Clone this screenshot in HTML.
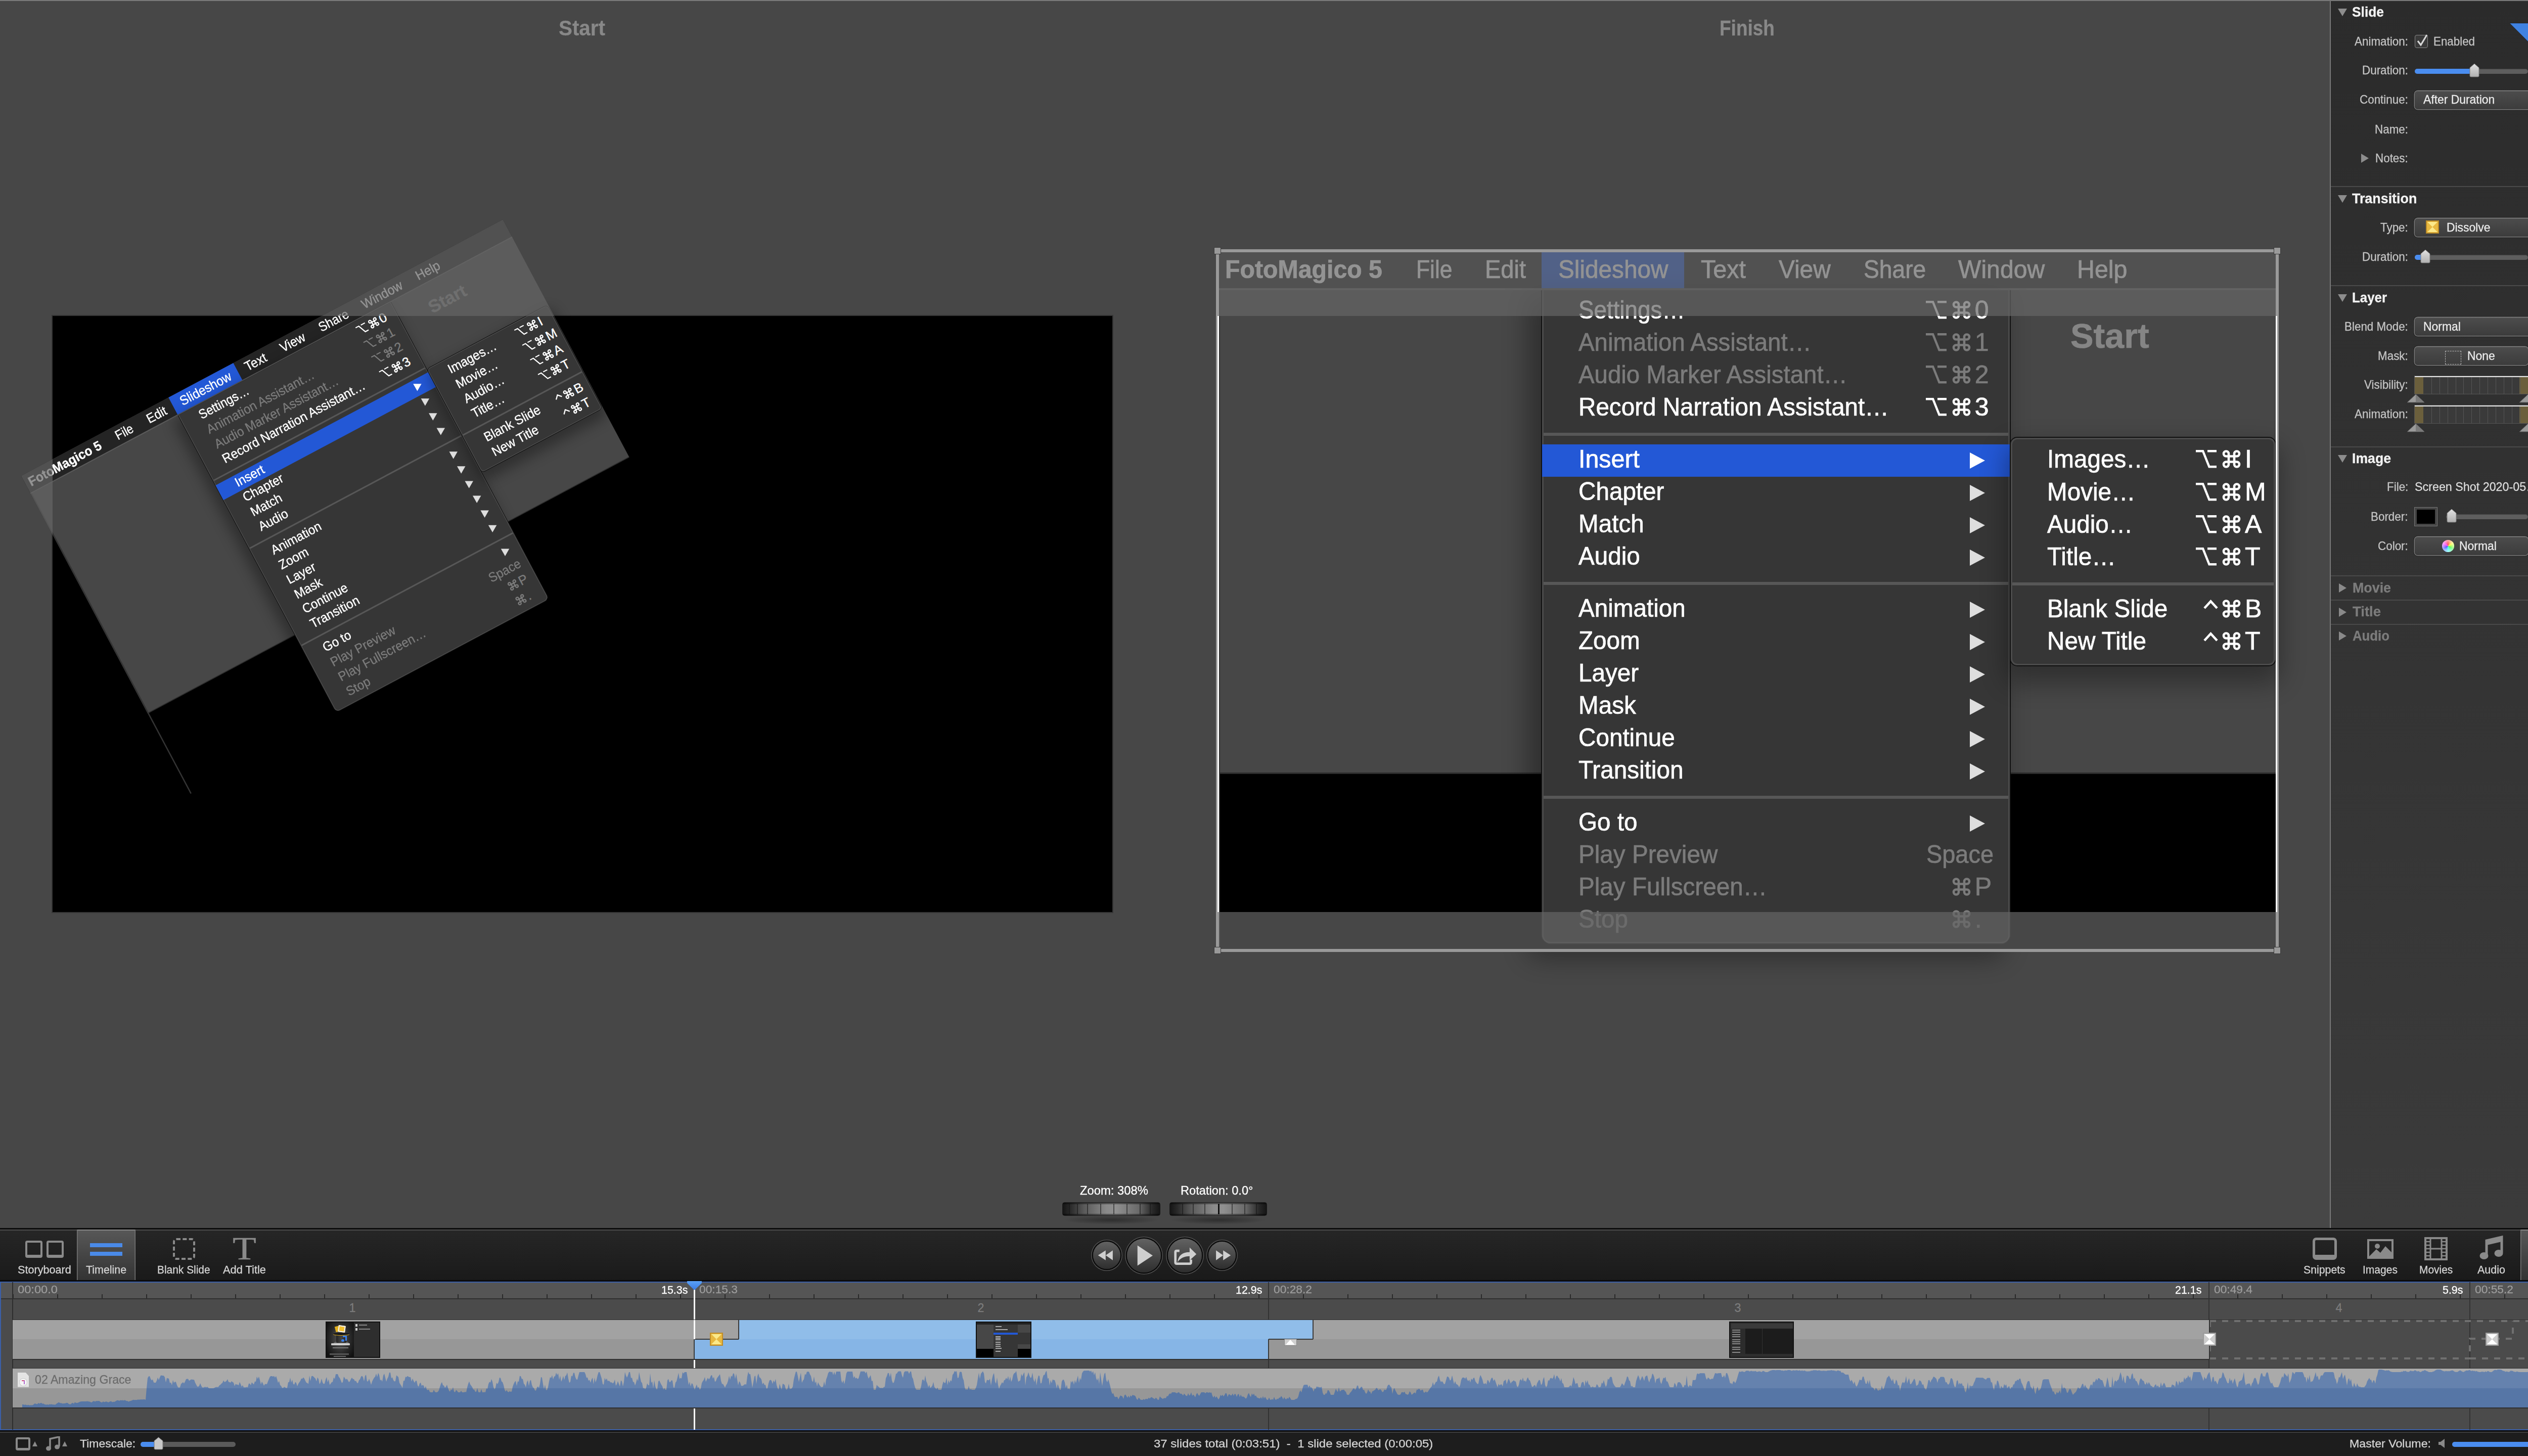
<!DOCTYPE html><html><head><meta charset="utf-8"><style>
*{margin:0;padding:0;box-sizing:border-box}
html,body{width:5120px;height:2880px;overflow:hidden;background:#474747}
body{position:relative;font-family:"Liberation Sans",sans-serif}
.t{position:absolute;white-space:nowrap;-webkit-text-stroke:0.3px currentColor}
.ab{position:absolute}
.lay .t{-webkit-text-stroke:0.7px currentColor}
</style></head><body><svg width="0" height="0" style="position:absolute"><defs>
<symbol id="cmd" viewBox="0 0 37 38"><path d="M13,8.5 V29.5 A5,5 0 1 1 8,24.5 H29 A5,5 0 1 1 24,29.5 V8.5 A5,5 0 1 1 29,13.5 H8 A5,5 0 1 1 13,8.5 Z" fill="none" stroke="currentColor" stroke-width="4.6"/></symbol>
<symbol id="opt" viewBox="0 0 41 36"><path d="M0,2.2 H14 L26.5,33.2 H41 M23,2.2 H41" fill="none" stroke="currentColor" stroke-width="4.4"/></symbol>
<symbol id="ctl" viewBox="0 0 29 19"><path d="M2,17 L14.5,3.5 L27,17" fill="none" stroke="currentColor" stroke-width="4.6"/></symbol>
</defs></svg><div style="position:absolute;left:0px;top:0px;width:4610px;height:2430px;background:#474747"></div><div style="position:absolute;left:0px;top:0px;width:4610px;height:2px;background:#7a7a7a"></div><div class="t" style="left:1105.0px;top:35.3px;font-size:42.15px;line-height:42.15px;font-weight:bold;color:#888888;transform:scaleX(0.9580);transform-origin:0 0;">Start</div><div class="t" style="left:3401.0px;top:35.3px;font-size:42.15px;line-height:42.15px;font-weight:bold;color:#888888;transform:scaleX(0.8783);transform-origin:0 0;">Finish</div><div style="position:absolute;left:102px;top:623px;width:2100px;height:1183px;background:#353535"></div><div style="position:absolute;left:104px;top:625px;width:2096px;height:1179px;background:#000"></div><div class="ab lay" style="left:0;top:0;width:2096px;height:1384px;transform-origin:0 0;transform:translate(41.96px,941.27px) rotate(-28.02deg) scale(0.5148)"><div style="position:absolute;left:0px;top:0px;width:2096px;height:1034px;background:#474747"></div><div style="position:absolute;left:0px;top:1034px;width:2096px;height:350px;background:#000"></div><div style="position:absolute;left:0px;top:1032px;width:2096px;height:3px;background:#2c2c2c"></div><div style="position:absolute;left:0px;top:0px;width:5px;height:1384px;background:#333333"></div><div class="t" style="left:1687.0px;top:134.2px;font-size:68.32px;line-height:68.32px;font-weight:bold;color:#858585;">Start</div><div style="position:absolute;left:0px;top:0px;width:2096px;height:74px;background:#242424"></div><div style="position:absolute;left:0px;top:74px;width:2096px;height:4px;background:#5a5a5a"></div><div style="position:absolute;left:641px;top:0px;width:282px;height:74px;background:#2358d6"></div><div class="t" style="left:15.0px;top:11.7px;font-size:50.87px;line-height:50.87px;font-weight:bold;color:#ffffff;transform:scaleX(0.9487);transform-origin:0 0;">FotoMagico 5</div><div class="t" style="left:392.6px;top:11.7px;font-size:50.87px;line-height:50.87px;font-weight:normal;color:#ffffff;transform:scaleX(0.8711);transform-origin:0 0;">File</div><div class="t" style="left:529.0px;top:11.7px;font-size:50.87px;line-height:50.87px;font-weight:normal;color:#ffffff;transform:scaleX(0.9240);transform-origin:0 0;">Edit</div><div class="t" style="left:673.5px;top:11.7px;font-size:50.87px;line-height:50.87px;font-weight:normal;color:#ffffff;transform:scaleX(0.9376);transform-origin:0 0;">Slideshow</div><div class="t" style="left:955.6px;top:11.7px;font-size:50.87px;line-height:50.87px;font-weight:normal;color:#ffffff;transform:scaleX(0.9540);transform-origin:0 0;">Text</div><div class="t" style="left:1109.7px;top:11.7px;font-size:50.87px;line-height:50.87px;font-weight:normal;color:#ffffff;transform:scaleX(0.9392);transform-origin:0 0;">View</div><div class="t" style="left:1278.4px;top:11.7px;font-size:50.87px;line-height:50.87px;font-weight:normal;color:#ffffff;transform:scaleX(0.9083);transform-origin:0 0;">Share</div><div class="t" style="left:1465.3px;top:11.7px;font-size:50.87px;line-height:50.87px;font-weight:normal;color:#ffffff;transform:scaleX(0.9462);transform-origin:0 0;">Window</div><div class="t" style="left:1700.0px;top:11.7px;font-size:50.87px;line-height:50.87px;font-weight:normal;color:#ffffff;transform:scaleX(0.9501);transform-origin:0 0;">Help</div><div style="position:absolute;left:642px;top:78px;width:925px;height:1292px;background:#363636;border-radius:0 0 17px 17px;box-shadow:-2px 0 0 0 #111, 2px 0 0 0 #111, 0 2px 0 0 #111, inset 3px 0 0 0 #4b4b4b, inset -3px 0 0 0 #4b4b4b, inset 0 -3px 0 0 #4b4b4b, -20px 20px 50px 10px rgba(0,0,0,0.33)"></div><div class="t" style="left:713.7px;top:92.1px;font-size:50.15px;line-height:50.15px;font-weight:normal;color:#ffffff;transform:scaleX(0.9121);transform-origin:0 0;">Settings…</div><svg style="position:absolute;left:1452.8px;top:98.1px;width:37px;height:38px;color:#ffffff;overflow:visible"><use href="#cmd" xlink:href="#cmd"/></svg><svg style="position:absolute;left:1400.8px;top:99.2px;width:41px;height:36px;color:#ffffff;overflow:visible"><use href="#opt" xlink:href="#opt"/></svg><div class="t" style="left:1497.8px;top:92.1px;font-size:50.15px;line-height:50.15px;font-weight:normal;color:#ffffff;">0</div><div class="t" style="left:713.7px;top:156.1px;font-size:50.15px;line-height:50.15px;font-weight:normal;color:#7b7b7b;transform:scaleX(0.9452);transform-origin:0 0;">Animation Assistant…</div><svg style="position:absolute;left:1452.8px;top:162.1px;width:37px;height:38px;color:#7b7b7b;overflow:visible"><use href="#cmd" xlink:href="#cmd"/></svg><svg style="position:absolute;left:1400.8px;top:163.2px;width:41px;height:36px;color:#7b7b7b;overflow:visible"><use href="#opt" xlink:href="#opt"/></svg><div class="t" style="left:1497.8px;top:156.1px;font-size:50.15px;line-height:50.15px;font-weight:normal;color:#7b7b7b;">1</div><div class="t" style="left:713.7px;top:220.1px;font-size:50.15px;line-height:50.15px;font-weight:normal;color:#7b7b7b;transform:scaleX(0.9450);transform-origin:0 0;">Audio Marker Assistant…</div><svg style="position:absolute;left:1452.8px;top:226.1px;width:37px;height:38px;color:#7b7b7b;overflow:visible"><use href="#cmd" xlink:href="#cmd"/></svg><svg style="position:absolute;left:1400.8px;top:227.2px;width:41px;height:36px;color:#7b7b7b;overflow:visible"><use href="#opt" xlink:href="#opt"/></svg><div class="t" style="left:1497.8px;top:220.1px;font-size:50.15px;line-height:50.15px;font-weight:normal;color:#7b7b7b;">2</div><div class="t" style="left:713.7px;top:284.1px;font-size:50.15px;line-height:50.15px;font-weight:normal;color:#ffffff;transform:scaleX(0.9496);transform-origin:0 0;">Record Narration Assistant…</div><svg style="position:absolute;left:1452.8px;top:290.1px;width:37px;height:38px;color:#ffffff;overflow:visible"><use href="#cmd" xlink:href="#cmd"/></svg><svg style="position:absolute;left:1400.8px;top:291.2px;width:41px;height:36px;color:#ffffff;overflow:visible"><use href="#opt" xlink:href="#opt"/></svg><div class="t" style="left:1497.8px;top:284.1px;font-size:50.15px;line-height:50.15px;font-weight:normal;color:#ffffff;">3</div><div style="position:absolute;left:645px;top:360px;width:919px;height:6px;background:#575757"></div><div style="position:absolute;left:642px;top:383px;width:925px;height:64px;background:#2358d6"></div><div class="t" style="left:713.7px;top:387.1px;font-size:50.15px;line-height:50.15px;font-weight:normal;color:#ffffff;transform:scaleX(0.9649);transform-origin:0 0;">Insert</div><div style="position:absolute;left:1487.0px;top:401.0px;width:0;height:0;border-top:28px solid #ffffff;border-left:16.0px solid transparent;border-right:16.0px solid transparent;transform:rotate(28.02deg);transform-origin:16.0px 14.0px"></div><div class="t" style="left:713.7px;top:451.1px;font-size:50.15px;line-height:50.15px;font-weight:normal;color:#ffffff;transform:scaleX(0.9500);transform-origin:0 0;">Chapter</div><div style="position:absolute;left:1487.0px;top:465.0px;width:0;height:0;border-top:28px solid #dedede;border-left:16.0px solid transparent;border-right:16.0px solid transparent;transform:rotate(28.02deg);transform-origin:16.0px 14.0px"></div><div class="t" style="left:713.7px;top:515.1px;font-size:50.15px;line-height:50.15px;font-weight:normal;color:#ffffff;transform:scaleX(0.9500);transform-origin:0 0;">Match</div><div style="position:absolute;left:1487.0px;top:529.0px;width:0;height:0;border-top:28px solid #dedede;border-left:16.0px solid transparent;border-right:16.0px solid transparent;transform:rotate(28.02deg);transform-origin:16.0px 14.0px"></div><div class="t" style="left:713.7px;top:579.1px;font-size:50.15px;line-height:50.15px;font-weight:normal;color:#ffffff;transform:scaleX(0.9500);transform-origin:0 0;">Audio</div><div style="position:absolute;left:1487.0px;top:593.0px;width:0;height:0;border-top:28px solid #dedede;border-left:16.0px solid transparent;border-right:16.0px solid transparent;transform:rotate(28.02deg);transform-origin:16.0px 14.0px"></div><div style="position:absolute;left:645px;top:655px;width:919px;height:6px;background:#575757"></div><div class="t" style="left:713.7px;top:682.1px;font-size:50.15px;line-height:50.15px;font-weight:normal;color:#ffffff;transform:scaleX(0.9500);transform-origin:0 0;">Animation</div><div style="position:absolute;left:1487.0px;top:696.0px;width:0;height:0;border-top:28px solid #dedede;border-left:16.0px solid transparent;border-right:16.0px solid transparent;transform:rotate(28.02deg);transform-origin:16.0px 14.0px"></div><div class="t" style="left:713.7px;top:746.1px;font-size:50.15px;line-height:50.15px;font-weight:normal;color:#ffffff;transform:scaleX(0.9500);transform-origin:0 0;">Zoom</div><div style="position:absolute;left:1487.0px;top:760.0px;width:0;height:0;border-top:28px solid #dedede;border-left:16.0px solid transparent;border-right:16.0px solid transparent;transform:rotate(28.02deg);transform-origin:16.0px 14.0px"></div><div class="t" style="left:713.7px;top:810.1px;font-size:50.15px;line-height:50.15px;font-weight:normal;color:#ffffff;transform:scaleX(0.9500);transform-origin:0 0;">Layer</div><div style="position:absolute;left:1487.0px;top:824.0px;width:0;height:0;border-top:28px solid #dedede;border-left:16.0px solid transparent;border-right:16.0px solid transparent;transform:rotate(28.02deg);transform-origin:16.0px 14.0px"></div><div class="t" style="left:713.7px;top:874.1px;font-size:50.15px;line-height:50.15px;font-weight:normal;color:#ffffff;transform:scaleX(0.9500);transform-origin:0 0;">Mask</div><div style="position:absolute;left:1487.0px;top:888.0px;width:0;height:0;border-top:28px solid #dedede;border-left:16.0px solid transparent;border-right:16.0px solid transparent;transform:rotate(28.02deg);transform-origin:16.0px 14.0px"></div><div class="t" style="left:713.7px;top:938.1px;font-size:50.15px;line-height:50.15px;font-weight:normal;color:#ffffff;transform:scaleX(0.9500);transform-origin:0 0;">Continue</div><div style="position:absolute;left:1487.0px;top:952.0px;width:0;height:0;border-top:28px solid #dedede;border-left:16.0px solid transparent;border-right:16.0px solid transparent;transform:rotate(28.02deg);transform-origin:16.0px 14.0px"></div><div class="t" style="left:713.7px;top:1002.1px;font-size:50.15px;line-height:50.15px;font-weight:normal;color:#ffffff;transform:scaleX(0.9500);transform-origin:0 0;">Transition</div><div style="position:absolute;left:1487.0px;top:1016.0px;width:0;height:0;border-top:28px solid #dedede;border-left:16.0px solid transparent;border-right:16.0px solid transparent;transform:rotate(28.02deg);transform-origin:16.0px 14.0px"></div><div style="position:absolute;left:645px;top:1078px;width:919px;height:6px;background:#575757"></div><div class="t" style="left:713.7px;top:1105.1px;font-size:50.15px;line-height:50.15px;font-weight:normal;color:#ffffff;transform:scaleX(0.9500);transform-origin:0 0;">Go to</div><div style="position:absolute;left:1487.0px;top:1119.0px;width:0;height:0;border-top:28px solid #dedede;border-left:16.0px solid transparent;border-right:16.0px solid transparent;transform:rotate(28.02deg);transform-origin:16.0px 14.0px"></div><div class="t" style="left:713.7px;top:1169.1px;font-size:50.15px;line-height:50.15px;font-weight:normal;color:#7b7b7b;transform:scaleX(0.9500);transform-origin:0 0;">Play Preview</div><div class="t" style="left:1401.7px;top:1169.1px;font-size:50.15px;line-height:50.15px;font-weight:normal;color:#7b7b7b;transform:scaleX(0.9354);transform-origin:0 0;">Space</div><div class="t" style="left:713.7px;top:1233.1px;font-size:50.15px;line-height:50.15px;font-weight:normal;color:#7b7b7b;transform:scaleX(0.9500);transform-origin:0 0;">Play Fullscreen…</div><svg style="position:absolute;left:1452.8px;top:1239.1px;width:37px;height:38px;color:#7b7b7b;overflow:visible"><use href="#cmd" xlink:href="#cmd"/></svg><div class="t" style="left:1497.8px;top:1233.1px;font-size:50.15px;line-height:50.15px;font-weight:normal;color:#7b7b7b;">P</div><div class="t" style="left:713.7px;top:1297.1px;font-size:50.15px;line-height:50.15px;font-weight:normal;color:#7b7b7b;transform:scaleX(0.9500);transform-origin:0 0;">Stop</div><svg style="position:absolute;left:1452.8px;top:1303.1px;width:37px;height:38px;color:#7b7b7b;overflow:visible"><use href="#cmd" xlink:href="#cmd"/></svg><div class="t" style="left:1497.8px;top:1297.1px;font-size:50.15px;line-height:50.15px;font-weight:normal;color:#7b7b7b;">.</div><div style="position:absolute;left:1569px;top:370px;width:523px;height:450px;background:#363636;border-radius:13px;box-shadow:0 0 0 2px #111, inset 0 0 0 3px #4b4b4b, 0 25px 50px 10px rgba(0,0,0,0.33)"></div><div class="t" style="left:1641.0px;top:387.1px;font-size:50.15px;line-height:50.15px;font-weight:normal;color:#ffffff;transform:scaleX(0.9500);transform-origin:0 0;">Images…</div><svg style="position:absolute;left:1987.0px;top:393.1px;width:37px;height:38px;color:#ffffff;overflow:visible"><use href="#cmd" xlink:href="#cmd"/></svg><svg style="position:absolute;left:1935.0px;top:394.2px;width:41px;height:36px;color:#ffffff;overflow:visible"><use href="#opt" xlink:href="#opt"/></svg><div class="t" style="left:2032.0px;top:387.1px;font-size:50.15px;line-height:50.15px;font-weight:normal;color:#ffffff;">I</div><div class="t" style="left:1641.0px;top:451.5px;font-size:50.15px;line-height:50.15px;font-weight:normal;color:#ffffff;transform:scaleX(0.9500);transform-origin:0 0;">Movie…</div><svg style="position:absolute;left:1987.0px;top:457.5px;width:37px;height:38px;color:#ffffff;overflow:visible"><use href="#cmd" xlink:href="#cmd"/></svg><svg style="position:absolute;left:1935.0px;top:458.6px;width:41px;height:36px;color:#ffffff;overflow:visible"><use href="#opt" xlink:href="#opt"/></svg><div class="t" style="left:2032.0px;top:451.5px;font-size:50.15px;line-height:50.15px;font-weight:normal;color:#ffffff;">M</div><div class="t" style="left:1641.0px;top:515.5px;font-size:50.15px;line-height:50.15px;font-weight:normal;color:#ffffff;transform:scaleX(0.9500);transform-origin:0 0;">Audio…</div><svg style="position:absolute;left:1987.0px;top:521.5px;width:37px;height:38px;color:#ffffff;overflow:visible"><use href="#cmd" xlink:href="#cmd"/></svg><svg style="position:absolute;left:1935.0px;top:522.6px;width:41px;height:36px;color:#ffffff;overflow:visible"><use href="#opt" xlink:href="#opt"/></svg><div class="t" style="left:2032.0px;top:515.5px;font-size:50.15px;line-height:50.15px;font-weight:normal;color:#ffffff;">A</div><div class="t" style="left:1641.0px;top:579.5px;font-size:50.15px;line-height:50.15px;font-weight:normal;color:#ffffff;transform:scaleX(0.9500);transform-origin:0 0;">Title…</div><svg style="position:absolute;left:1987.0px;top:585.5px;width:37px;height:38px;color:#ffffff;overflow:visible"><use href="#cmd" xlink:href="#cmd"/></svg><svg style="position:absolute;left:1935.0px;top:586.6px;width:41px;height:36px;color:#ffffff;overflow:visible"><use href="#opt" xlink:href="#opt"/></svg><div class="t" style="left:2032.0px;top:579.5px;font-size:50.15px;line-height:50.15px;font-weight:normal;color:#ffffff;">T</div><div class="t" style="left:1641.0px;top:682.5px;font-size:50.15px;line-height:50.15px;font-weight:normal;color:#ffffff;transform:scaleX(0.9500);transform-origin:0 0;">Blank Slide</div><svg style="position:absolute;left:1987.0px;top:688.5px;width:37px;height:38px;color:#ffffff;overflow:visible"><use href="#cmd" xlink:href="#cmd"/></svg><svg style="position:absolute;left:1950.0px;top:689.5px;width:29px;height:19px;color:#ffffff;overflow:visible"><use href="#ctl" xlink:href="#ctl"/></svg><div class="t" style="left:2032.0px;top:682.5px;font-size:50.15px;line-height:50.15px;font-weight:normal;color:#ffffff;">B</div><div class="t" style="left:1641.0px;top:746.5px;font-size:50.15px;line-height:50.15px;font-weight:normal;color:#ffffff;transform:scaleX(0.9500);transform-origin:0 0;">New Title</div><svg style="position:absolute;left:1987.0px;top:752.5px;width:37px;height:38px;color:#ffffff;overflow:visible"><use href="#cmd" xlink:href="#cmd"/></svg><svg style="position:absolute;left:1950.0px;top:753.5px;width:29px;height:19px;color:#ffffff;overflow:visible"><use href="#ctl" xlink:href="#ctl"/></svg><div class="t" style="left:2032.0px;top:746.5px;font-size:50.15px;line-height:50.15px;font-weight:normal;color:#ffffff;">T</div><div style="position:absolute;left:1572px;top:656px;width:517px;height:6px;background:#575757"></div><div class="ab" style="left:0;top:0;width:2096px;height:1384px;background:rgba(101,101,101,0.70)"></div></div><div class="ab" style="left:104px;top:625px;width:2096px;height:1179px;overflow:hidden;background:#000"><div class="ab lay" style="left:0;top:0;width:2096px;height:1384px;transform-origin:0 0;transform:translate(-62.04px,316.27px) rotate(-28.02deg) scale(0.5148)"><div style="position:absolute;left:0px;top:0px;width:2096px;height:1034px;background:#474747"></div><div style="position:absolute;left:0px;top:1034px;width:2096px;height:350px;background:#000"></div><div style="position:absolute;left:0px;top:1032px;width:2096px;height:3px;background:#2c2c2c"></div><div style="position:absolute;left:0px;top:0px;width:5px;height:1384px;background:#333333"></div><div class="t" style="left:1687.0px;top:134.2px;font-size:68.32px;line-height:68.32px;font-weight:bold;color:#858585;">Start</div><div style="position:absolute;left:0px;top:0px;width:2096px;height:74px;background:#242424"></div><div style="position:absolute;left:0px;top:74px;width:2096px;height:4px;background:#5a5a5a"></div><div style="position:absolute;left:641px;top:0px;width:282px;height:74px;background:#2358d6"></div><div class="t" style="left:15.0px;top:11.7px;font-size:50.87px;line-height:50.87px;font-weight:bold;color:#ffffff;transform:scaleX(0.9487);transform-origin:0 0;">FotoMagico 5</div><div class="t" style="left:392.6px;top:11.7px;font-size:50.87px;line-height:50.87px;font-weight:normal;color:#ffffff;transform:scaleX(0.8711);transform-origin:0 0;">File</div><div class="t" style="left:529.0px;top:11.7px;font-size:50.87px;line-height:50.87px;font-weight:normal;color:#ffffff;transform:scaleX(0.9240);transform-origin:0 0;">Edit</div><div class="t" style="left:673.5px;top:11.7px;font-size:50.87px;line-height:50.87px;font-weight:normal;color:#ffffff;transform:scaleX(0.9376);transform-origin:0 0;">Slideshow</div><div class="t" style="left:955.6px;top:11.7px;font-size:50.87px;line-height:50.87px;font-weight:normal;color:#ffffff;transform:scaleX(0.9540);transform-origin:0 0;">Text</div><div class="t" style="left:1109.7px;top:11.7px;font-size:50.87px;line-height:50.87px;font-weight:normal;color:#ffffff;transform:scaleX(0.9392);transform-origin:0 0;">View</div><div class="t" style="left:1278.4px;top:11.7px;font-size:50.87px;line-height:50.87px;font-weight:normal;color:#ffffff;transform:scaleX(0.9083);transform-origin:0 0;">Share</div><div class="t" style="left:1465.3px;top:11.7px;font-size:50.87px;line-height:50.87px;font-weight:normal;color:#ffffff;transform:scaleX(0.9462);transform-origin:0 0;">Window</div><div class="t" style="left:1700.0px;top:11.7px;font-size:50.87px;line-height:50.87px;font-weight:normal;color:#ffffff;transform:scaleX(0.9501);transform-origin:0 0;">Help</div><div style="position:absolute;left:642px;top:78px;width:925px;height:1292px;background:#363636;border-radius:0 0 17px 17px;box-shadow:-2px 0 0 0 #111, 2px 0 0 0 #111, 0 2px 0 0 #111, inset 3px 0 0 0 #4b4b4b, inset -3px 0 0 0 #4b4b4b, inset 0 -3px 0 0 #4b4b4b, -20px 20px 50px 10px rgba(0,0,0,0.33)"></div><div class="t" style="left:713.7px;top:92.1px;font-size:50.15px;line-height:50.15px;font-weight:normal;color:#ffffff;transform:scaleX(0.9121);transform-origin:0 0;">Settings…</div><svg style="position:absolute;left:1452.8px;top:98.1px;width:37px;height:38px;color:#ffffff;overflow:visible"><use href="#cmd" xlink:href="#cmd"/></svg><svg style="position:absolute;left:1400.8px;top:99.2px;width:41px;height:36px;color:#ffffff;overflow:visible"><use href="#opt" xlink:href="#opt"/></svg><div class="t" style="left:1497.8px;top:92.1px;font-size:50.15px;line-height:50.15px;font-weight:normal;color:#ffffff;">0</div><div class="t" style="left:713.7px;top:156.1px;font-size:50.15px;line-height:50.15px;font-weight:normal;color:#7b7b7b;transform:scaleX(0.9452);transform-origin:0 0;">Animation Assistant…</div><svg style="position:absolute;left:1452.8px;top:162.1px;width:37px;height:38px;color:#7b7b7b;overflow:visible"><use href="#cmd" xlink:href="#cmd"/></svg><svg style="position:absolute;left:1400.8px;top:163.2px;width:41px;height:36px;color:#7b7b7b;overflow:visible"><use href="#opt" xlink:href="#opt"/></svg><div class="t" style="left:1497.8px;top:156.1px;font-size:50.15px;line-height:50.15px;font-weight:normal;color:#7b7b7b;">1</div><div class="t" style="left:713.7px;top:220.1px;font-size:50.15px;line-height:50.15px;font-weight:normal;color:#7b7b7b;transform:scaleX(0.9450);transform-origin:0 0;">Audio Marker Assistant…</div><svg style="position:absolute;left:1452.8px;top:226.1px;width:37px;height:38px;color:#7b7b7b;overflow:visible"><use href="#cmd" xlink:href="#cmd"/></svg><svg style="position:absolute;left:1400.8px;top:227.2px;width:41px;height:36px;color:#7b7b7b;overflow:visible"><use href="#opt" xlink:href="#opt"/></svg><div class="t" style="left:1497.8px;top:220.1px;font-size:50.15px;line-height:50.15px;font-weight:normal;color:#7b7b7b;">2</div><div class="t" style="left:713.7px;top:284.1px;font-size:50.15px;line-height:50.15px;font-weight:normal;color:#ffffff;transform:scaleX(0.9496);transform-origin:0 0;">Record Narration Assistant…</div><svg style="position:absolute;left:1452.8px;top:290.1px;width:37px;height:38px;color:#ffffff;overflow:visible"><use href="#cmd" xlink:href="#cmd"/></svg><svg style="position:absolute;left:1400.8px;top:291.2px;width:41px;height:36px;color:#ffffff;overflow:visible"><use href="#opt" xlink:href="#opt"/></svg><div class="t" style="left:1497.8px;top:284.1px;font-size:50.15px;line-height:50.15px;font-weight:normal;color:#ffffff;">3</div><div style="position:absolute;left:645px;top:360px;width:919px;height:6px;background:#575757"></div><div style="position:absolute;left:642px;top:383px;width:925px;height:64px;background:#2358d6"></div><div class="t" style="left:713.7px;top:387.1px;font-size:50.15px;line-height:50.15px;font-weight:normal;color:#ffffff;transform:scaleX(0.9649);transform-origin:0 0;">Insert</div><div style="position:absolute;left:1487.0px;top:401.0px;width:0;height:0;border-top:28px solid #ffffff;border-left:16.0px solid transparent;border-right:16.0px solid transparent;transform:rotate(28.02deg);transform-origin:16.0px 14.0px"></div><div class="t" style="left:713.7px;top:451.1px;font-size:50.15px;line-height:50.15px;font-weight:normal;color:#ffffff;transform:scaleX(0.9500);transform-origin:0 0;">Chapter</div><div style="position:absolute;left:1487.0px;top:465.0px;width:0;height:0;border-top:28px solid #dedede;border-left:16.0px solid transparent;border-right:16.0px solid transparent;transform:rotate(28.02deg);transform-origin:16.0px 14.0px"></div><div class="t" style="left:713.7px;top:515.1px;font-size:50.15px;line-height:50.15px;font-weight:normal;color:#ffffff;transform:scaleX(0.9500);transform-origin:0 0;">Match</div><div style="position:absolute;left:1487.0px;top:529.0px;width:0;height:0;border-top:28px solid #dedede;border-left:16.0px solid transparent;border-right:16.0px solid transparent;transform:rotate(28.02deg);transform-origin:16.0px 14.0px"></div><div class="t" style="left:713.7px;top:579.1px;font-size:50.15px;line-height:50.15px;font-weight:normal;color:#ffffff;transform:scaleX(0.9500);transform-origin:0 0;">Audio</div><div style="position:absolute;left:1487.0px;top:593.0px;width:0;height:0;border-top:28px solid #dedede;border-left:16.0px solid transparent;border-right:16.0px solid transparent;transform:rotate(28.02deg);transform-origin:16.0px 14.0px"></div><div style="position:absolute;left:645px;top:655px;width:919px;height:6px;background:#575757"></div><div class="t" style="left:713.7px;top:682.1px;font-size:50.15px;line-height:50.15px;font-weight:normal;color:#ffffff;transform:scaleX(0.9500);transform-origin:0 0;">Animation</div><div style="position:absolute;left:1487.0px;top:696.0px;width:0;height:0;border-top:28px solid #dedede;border-left:16.0px solid transparent;border-right:16.0px solid transparent;transform:rotate(28.02deg);transform-origin:16.0px 14.0px"></div><div class="t" style="left:713.7px;top:746.1px;font-size:50.15px;line-height:50.15px;font-weight:normal;color:#ffffff;transform:scaleX(0.9500);transform-origin:0 0;">Zoom</div><div style="position:absolute;left:1487.0px;top:760.0px;width:0;height:0;border-top:28px solid #dedede;border-left:16.0px solid transparent;border-right:16.0px solid transparent;transform:rotate(28.02deg);transform-origin:16.0px 14.0px"></div><div class="t" style="left:713.7px;top:810.1px;font-size:50.15px;line-height:50.15px;font-weight:normal;color:#ffffff;transform:scaleX(0.9500);transform-origin:0 0;">Layer</div><div style="position:absolute;left:1487.0px;top:824.0px;width:0;height:0;border-top:28px solid #dedede;border-left:16.0px solid transparent;border-right:16.0px solid transparent;transform:rotate(28.02deg);transform-origin:16.0px 14.0px"></div><div class="t" style="left:713.7px;top:874.1px;font-size:50.15px;line-height:50.15px;font-weight:normal;color:#ffffff;transform:scaleX(0.9500);transform-origin:0 0;">Mask</div><div style="position:absolute;left:1487.0px;top:888.0px;width:0;height:0;border-top:28px solid #dedede;border-left:16.0px solid transparent;border-right:16.0px solid transparent;transform:rotate(28.02deg);transform-origin:16.0px 14.0px"></div><div class="t" style="left:713.7px;top:938.1px;font-size:50.15px;line-height:50.15px;font-weight:normal;color:#ffffff;transform:scaleX(0.9500);transform-origin:0 0;">Continue</div><div style="position:absolute;left:1487.0px;top:952.0px;width:0;height:0;border-top:28px solid #dedede;border-left:16.0px solid transparent;border-right:16.0px solid transparent;transform:rotate(28.02deg);transform-origin:16.0px 14.0px"></div><div class="t" style="left:713.7px;top:1002.1px;font-size:50.15px;line-height:50.15px;font-weight:normal;color:#ffffff;transform:scaleX(0.9500);transform-origin:0 0;">Transition</div><div style="position:absolute;left:1487.0px;top:1016.0px;width:0;height:0;border-top:28px solid #dedede;border-left:16.0px solid transparent;border-right:16.0px solid transparent;transform:rotate(28.02deg);transform-origin:16.0px 14.0px"></div><div style="position:absolute;left:645px;top:1078px;width:919px;height:6px;background:#575757"></div><div class="t" style="left:713.7px;top:1105.1px;font-size:50.15px;line-height:50.15px;font-weight:normal;color:#ffffff;transform:scaleX(0.9500);transform-origin:0 0;">Go to</div><div style="position:absolute;left:1487.0px;top:1119.0px;width:0;height:0;border-top:28px solid #dedede;border-left:16.0px solid transparent;border-right:16.0px solid transparent;transform:rotate(28.02deg);transform-origin:16.0px 14.0px"></div><div class="t" style="left:713.7px;top:1169.1px;font-size:50.15px;line-height:50.15px;font-weight:normal;color:#7b7b7b;transform:scaleX(0.9500);transform-origin:0 0;">Play Preview</div><div class="t" style="left:1401.7px;top:1169.1px;font-size:50.15px;line-height:50.15px;font-weight:normal;color:#7b7b7b;transform:scaleX(0.9354);transform-origin:0 0;">Space</div><div class="t" style="left:713.7px;top:1233.1px;font-size:50.15px;line-height:50.15px;font-weight:normal;color:#7b7b7b;transform:scaleX(0.9500);transform-origin:0 0;">Play Fullscreen…</div><svg style="position:absolute;left:1452.8px;top:1239.1px;width:37px;height:38px;color:#7b7b7b;overflow:visible"><use href="#cmd" xlink:href="#cmd"/></svg><div class="t" style="left:1497.8px;top:1233.1px;font-size:50.15px;line-height:50.15px;font-weight:normal;color:#7b7b7b;">P</div><div class="t" style="left:713.7px;top:1297.1px;font-size:50.15px;line-height:50.15px;font-weight:normal;color:#7b7b7b;transform:scaleX(0.9500);transform-origin:0 0;">Stop</div><svg style="position:absolute;left:1452.8px;top:1303.1px;width:37px;height:38px;color:#7b7b7b;overflow:visible"><use href="#cmd" xlink:href="#cmd"/></svg><div class="t" style="left:1497.8px;top:1297.1px;font-size:50.15px;line-height:50.15px;font-weight:normal;color:#7b7b7b;">.</div><div style="position:absolute;left:1569px;top:370px;width:523px;height:450px;background:#363636;border-radius:13px;box-shadow:0 0 0 2px #111, inset 0 0 0 3px #4b4b4b, 0 25px 50px 10px rgba(0,0,0,0.33)"></div><div class="t" style="left:1641.0px;top:387.1px;font-size:50.15px;line-height:50.15px;font-weight:normal;color:#ffffff;transform:scaleX(0.9500);transform-origin:0 0;">Images…</div><svg style="position:absolute;left:1987.0px;top:393.1px;width:37px;height:38px;color:#ffffff;overflow:visible"><use href="#cmd" xlink:href="#cmd"/></svg><svg style="position:absolute;left:1935.0px;top:394.2px;width:41px;height:36px;color:#ffffff;overflow:visible"><use href="#opt" xlink:href="#opt"/></svg><div class="t" style="left:2032.0px;top:387.1px;font-size:50.15px;line-height:50.15px;font-weight:normal;color:#ffffff;">I</div><div class="t" style="left:1641.0px;top:451.5px;font-size:50.15px;line-height:50.15px;font-weight:normal;color:#ffffff;transform:scaleX(0.9500);transform-origin:0 0;">Movie…</div><svg style="position:absolute;left:1987.0px;top:457.5px;width:37px;height:38px;color:#ffffff;overflow:visible"><use href="#cmd" xlink:href="#cmd"/></svg><svg style="position:absolute;left:1935.0px;top:458.6px;width:41px;height:36px;color:#ffffff;overflow:visible"><use href="#opt" xlink:href="#opt"/></svg><div class="t" style="left:2032.0px;top:451.5px;font-size:50.15px;line-height:50.15px;font-weight:normal;color:#ffffff;">M</div><div class="t" style="left:1641.0px;top:515.5px;font-size:50.15px;line-height:50.15px;font-weight:normal;color:#ffffff;transform:scaleX(0.9500);transform-origin:0 0;">Audio…</div><svg style="position:absolute;left:1987.0px;top:521.5px;width:37px;height:38px;color:#ffffff;overflow:visible"><use href="#cmd" xlink:href="#cmd"/></svg><svg style="position:absolute;left:1935.0px;top:522.6px;width:41px;height:36px;color:#ffffff;overflow:visible"><use href="#opt" xlink:href="#opt"/></svg><div class="t" style="left:2032.0px;top:515.5px;font-size:50.15px;line-height:50.15px;font-weight:normal;color:#ffffff;">A</div><div class="t" style="left:1641.0px;top:579.5px;font-size:50.15px;line-height:50.15px;font-weight:normal;color:#ffffff;transform:scaleX(0.9500);transform-origin:0 0;">Title…</div><svg style="position:absolute;left:1987.0px;top:585.5px;width:37px;height:38px;color:#ffffff;overflow:visible"><use href="#cmd" xlink:href="#cmd"/></svg><svg style="position:absolute;left:1935.0px;top:586.6px;width:41px;height:36px;color:#ffffff;overflow:visible"><use href="#opt" xlink:href="#opt"/></svg><div class="t" style="left:2032.0px;top:579.5px;font-size:50.15px;line-height:50.15px;font-weight:normal;color:#ffffff;">T</div><div class="t" style="left:1641.0px;top:682.5px;font-size:50.15px;line-height:50.15px;font-weight:normal;color:#ffffff;transform:scaleX(0.9500);transform-origin:0 0;">Blank Slide</div><svg style="position:absolute;left:1987.0px;top:688.5px;width:37px;height:38px;color:#ffffff;overflow:visible"><use href="#cmd" xlink:href="#cmd"/></svg><svg style="position:absolute;left:1950.0px;top:689.5px;width:29px;height:19px;color:#ffffff;overflow:visible"><use href="#ctl" xlink:href="#ctl"/></svg><div class="t" style="left:2032.0px;top:682.5px;font-size:50.15px;line-height:50.15px;font-weight:normal;color:#ffffff;">B</div><div class="t" style="left:1641.0px;top:746.5px;font-size:50.15px;line-height:50.15px;font-weight:normal;color:#ffffff;transform:scaleX(0.9500);transform-origin:0 0;">New Title</div><svg style="position:absolute;left:1987.0px;top:752.5px;width:37px;height:38px;color:#ffffff;overflow:visible"><use href="#cmd" xlink:href="#cmd"/></svg><svg style="position:absolute;left:1950.0px;top:753.5px;width:29px;height:19px;color:#ffffff;overflow:visible"><use href="#ctl" xlink:href="#ctl"/></svg><div class="t" style="left:2032.0px;top:746.5px;font-size:50.15px;line-height:50.15px;font-weight:normal;color:#ffffff;">T</div><div style="position:absolute;left:1572px;top:656px;width:517px;height:6px;background:#575757"></div></div></div><div style="position:absolute;left:2406px;top:623px;width:2100px;height:1183px;background:#353535"></div><div style="position:absolute;left:2408px;top:625px;width:2096px;height:1179px;background:#000"></div><div class="ab lay" style="left:2408px;top:496px;width:2096px;height:1384px"><div style="position:absolute;left:0px;top:0px;width:2096px;height:1034px;background:#474747"></div><div style="position:absolute;left:0px;top:1034px;width:2096px;height:350px;background:#000"></div><div style="position:absolute;left:0px;top:1032px;width:2096px;height:3px;background:#2c2c2c"></div><div style="position:absolute;left:0px;top:0px;width:5px;height:1384px;background:#333333"></div><div class="t" style="left:1687.0px;top:134.2px;font-size:68.32px;line-height:68.32px;font-weight:bold;color:#858585;">Start</div><div style="position:absolute;left:0px;top:0px;width:2096px;height:74px;background:#242424"></div><div style="position:absolute;left:0px;top:74px;width:2096px;height:4px;background:#5a5a5a"></div><div style="position:absolute;left:641px;top:0px;width:282px;height:74px;background:#2358d6"></div><div class="t" style="left:15.0px;top:11.7px;font-size:50.87px;line-height:50.87px;font-weight:bold;color:#ffffff;transform:scaleX(0.9487);transform-origin:0 0;">FotoMagico 5</div><div class="t" style="left:392.6px;top:11.7px;font-size:50.87px;line-height:50.87px;font-weight:normal;color:#ffffff;transform:scaleX(0.8711);transform-origin:0 0;">File</div><div class="t" style="left:529.0px;top:11.7px;font-size:50.87px;line-height:50.87px;font-weight:normal;color:#ffffff;transform:scaleX(0.9240);transform-origin:0 0;">Edit</div><div class="t" style="left:673.5px;top:11.7px;font-size:50.87px;line-height:50.87px;font-weight:normal;color:#ffffff;transform:scaleX(0.9376);transform-origin:0 0;">Slideshow</div><div class="t" style="left:955.6px;top:11.7px;font-size:50.87px;line-height:50.87px;font-weight:normal;color:#ffffff;transform:scaleX(0.9540);transform-origin:0 0;">Text</div><div class="t" style="left:1109.7px;top:11.7px;font-size:50.87px;line-height:50.87px;font-weight:normal;color:#ffffff;transform:scaleX(0.9392);transform-origin:0 0;">View</div><div class="t" style="left:1278.4px;top:11.7px;font-size:50.87px;line-height:50.87px;font-weight:normal;color:#ffffff;transform:scaleX(0.9083);transform-origin:0 0;">Share</div><div class="t" style="left:1465.3px;top:11.7px;font-size:50.87px;line-height:50.87px;font-weight:normal;color:#ffffff;transform:scaleX(0.9462);transform-origin:0 0;">Window</div><div class="t" style="left:1700.0px;top:11.7px;font-size:50.87px;line-height:50.87px;font-weight:normal;color:#ffffff;transform:scaleX(0.9501);transform-origin:0 0;">Help</div><div style="position:absolute;left:642px;top:78px;width:925px;height:1292px;background:#363636;border-radius:0 0 17px 17px;box-shadow:-2px 0 0 0 #111, 2px 0 0 0 #111, 0 2px 0 0 #111, inset 3px 0 0 0 #4b4b4b, inset -3px 0 0 0 #4b4b4b, inset 0 -3px 0 0 #4b4b4b, -20px 20px 50px 10px rgba(0,0,0,0.33)"></div><div class="t" style="left:713.7px;top:92.1px;font-size:50.15px;line-height:50.15px;font-weight:normal;color:#ffffff;transform:scaleX(0.9121);transform-origin:0 0;">Settings…</div><svg style="position:absolute;left:1452.8px;top:98.1px;width:37px;height:38px;color:#ffffff;overflow:visible"><use href="#cmd" xlink:href="#cmd"/></svg><svg style="position:absolute;left:1400.8px;top:99.2px;width:41px;height:36px;color:#ffffff;overflow:visible"><use href="#opt" xlink:href="#opt"/></svg><div class="t" style="left:1497.8px;top:92.1px;font-size:50.15px;line-height:50.15px;font-weight:normal;color:#ffffff;">0</div><div class="t" style="left:713.7px;top:156.1px;font-size:50.15px;line-height:50.15px;font-weight:normal;color:#7b7b7b;transform:scaleX(0.9452);transform-origin:0 0;">Animation Assistant…</div><svg style="position:absolute;left:1452.8px;top:162.1px;width:37px;height:38px;color:#7b7b7b;overflow:visible"><use href="#cmd" xlink:href="#cmd"/></svg><svg style="position:absolute;left:1400.8px;top:163.2px;width:41px;height:36px;color:#7b7b7b;overflow:visible"><use href="#opt" xlink:href="#opt"/></svg><div class="t" style="left:1497.8px;top:156.1px;font-size:50.15px;line-height:50.15px;font-weight:normal;color:#7b7b7b;">1</div><div class="t" style="left:713.7px;top:220.1px;font-size:50.15px;line-height:50.15px;font-weight:normal;color:#7b7b7b;transform:scaleX(0.9450);transform-origin:0 0;">Audio Marker Assistant…</div><svg style="position:absolute;left:1452.8px;top:226.1px;width:37px;height:38px;color:#7b7b7b;overflow:visible"><use href="#cmd" xlink:href="#cmd"/></svg><svg style="position:absolute;left:1400.8px;top:227.2px;width:41px;height:36px;color:#7b7b7b;overflow:visible"><use href="#opt" xlink:href="#opt"/></svg><div class="t" style="left:1497.8px;top:220.1px;font-size:50.15px;line-height:50.15px;font-weight:normal;color:#7b7b7b;">2</div><div class="t" style="left:713.7px;top:284.1px;font-size:50.15px;line-height:50.15px;font-weight:normal;color:#ffffff;transform:scaleX(0.9496);transform-origin:0 0;">Record Narration Assistant…</div><svg style="position:absolute;left:1452.8px;top:290.1px;width:37px;height:38px;color:#ffffff;overflow:visible"><use href="#cmd" xlink:href="#cmd"/></svg><svg style="position:absolute;left:1400.8px;top:291.2px;width:41px;height:36px;color:#ffffff;overflow:visible"><use href="#opt" xlink:href="#opt"/></svg><div class="t" style="left:1497.8px;top:284.1px;font-size:50.15px;line-height:50.15px;font-weight:normal;color:#ffffff;">3</div><div style="position:absolute;left:645px;top:360px;width:919px;height:6px;background:#575757"></div><div style="position:absolute;left:642px;top:383px;width:925px;height:64px;background:#2358d6"></div><div class="t" style="left:713.7px;top:387.1px;font-size:50.15px;line-height:50.15px;font-weight:normal;color:#ffffff;transform:scaleX(0.9649);transform-origin:0 0;">Insert</div><div style="position:absolute;left:1488.0px;top:399.0px;width:0;height:0;border-left:30px solid #ffffff;border-top:16.0px solid transparent;border-bottom:16.0px solid transparent"></div><div class="t" style="left:713.7px;top:451.1px;font-size:50.15px;line-height:50.15px;font-weight:normal;color:#ffffff;transform:scaleX(0.9500);transform-origin:0 0;">Chapter</div><div style="position:absolute;left:1488.0px;top:463.0px;width:0;height:0;border-left:30px solid #dedede;border-top:16.0px solid transparent;border-bottom:16.0px solid transparent"></div><div class="t" style="left:713.7px;top:515.1px;font-size:50.15px;line-height:50.15px;font-weight:normal;color:#ffffff;transform:scaleX(0.9500);transform-origin:0 0;">Match</div><div style="position:absolute;left:1488.0px;top:527.0px;width:0;height:0;border-left:30px solid #dedede;border-top:16.0px solid transparent;border-bottom:16.0px solid transparent"></div><div class="t" style="left:713.7px;top:579.1px;font-size:50.15px;line-height:50.15px;font-weight:normal;color:#ffffff;transform:scaleX(0.9500);transform-origin:0 0;">Audio</div><div style="position:absolute;left:1488.0px;top:591.0px;width:0;height:0;border-left:30px solid #dedede;border-top:16.0px solid transparent;border-bottom:16.0px solid transparent"></div><div style="position:absolute;left:645px;top:655px;width:919px;height:6px;background:#575757"></div><div class="t" style="left:713.7px;top:682.1px;font-size:50.15px;line-height:50.15px;font-weight:normal;color:#ffffff;transform:scaleX(0.9500);transform-origin:0 0;">Animation</div><div style="position:absolute;left:1488.0px;top:694.0px;width:0;height:0;border-left:30px solid #dedede;border-top:16.0px solid transparent;border-bottom:16.0px solid transparent"></div><div class="t" style="left:713.7px;top:746.1px;font-size:50.15px;line-height:50.15px;font-weight:normal;color:#ffffff;transform:scaleX(0.9500);transform-origin:0 0;">Zoom</div><div style="position:absolute;left:1488.0px;top:758.0px;width:0;height:0;border-left:30px solid #dedede;border-top:16.0px solid transparent;border-bottom:16.0px solid transparent"></div><div class="t" style="left:713.7px;top:810.1px;font-size:50.15px;line-height:50.15px;font-weight:normal;color:#ffffff;transform:scaleX(0.9500);transform-origin:0 0;">Layer</div><div style="position:absolute;left:1488.0px;top:822.0px;width:0;height:0;border-left:30px solid #dedede;border-top:16.0px solid transparent;border-bottom:16.0px solid transparent"></div><div class="t" style="left:713.7px;top:874.1px;font-size:50.15px;line-height:50.15px;font-weight:normal;color:#ffffff;transform:scaleX(0.9500);transform-origin:0 0;">Mask</div><div style="position:absolute;left:1488.0px;top:886.0px;width:0;height:0;border-left:30px solid #dedede;border-top:16.0px solid transparent;border-bottom:16.0px solid transparent"></div><div class="t" style="left:713.7px;top:938.1px;font-size:50.15px;line-height:50.15px;font-weight:normal;color:#ffffff;transform:scaleX(0.9500);transform-origin:0 0;">Continue</div><div style="position:absolute;left:1488.0px;top:950.0px;width:0;height:0;border-left:30px solid #dedede;border-top:16.0px solid transparent;border-bottom:16.0px solid transparent"></div><div class="t" style="left:713.7px;top:1002.1px;font-size:50.15px;line-height:50.15px;font-weight:normal;color:#ffffff;transform:scaleX(0.9500);transform-origin:0 0;">Transition</div><div style="position:absolute;left:1488.0px;top:1014.0px;width:0;height:0;border-left:30px solid #dedede;border-top:16.0px solid transparent;border-bottom:16.0px solid transparent"></div><div style="position:absolute;left:645px;top:1078px;width:919px;height:6px;background:#575757"></div><div class="t" style="left:713.7px;top:1105.1px;font-size:50.15px;line-height:50.15px;font-weight:normal;color:#ffffff;transform:scaleX(0.9500);transform-origin:0 0;">Go to</div><div style="position:absolute;left:1488.0px;top:1117.0px;width:0;height:0;border-left:30px solid #dedede;border-top:16.0px solid transparent;border-bottom:16.0px solid transparent"></div><div class="t" style="left:713.7px;top:1169.1px;font-size:50.15px;line-height:50.15px;font-weight:normal;color:#7b7b7b;transform:scaleX(0.9500);transform-origin:0 0;">Play Preview</div><div class="t" style="left:1401.7px;top:1169.1px;font-size:50.15px;line-height:50.15px;font-weight:normal;color:#7b7b7b;transform:scaleX(0.9354);transform-origin:0 0;">Space</div><div class="t" style="left:713.7px;top:1233.1px;font-size:50.15px;line-height:50.15px;font-weight:normal;color:#7b7b7b;transform:scaleX(0.9500);transform-origin:0 0;">Play Fullscreen…</div><svg style="position:absolute;left:1452.8px;top:1239.1px;width:37px;height:38px;color:#7b7b7b;overflow:visible"><use href="#cmd" xlink:href="#cmd"/></svg><div class="t" style="left:1497.8px;top:1233.1px;font-size:50.15px;line-height:50.15px;font-weight:normal;color:#7b7b7b;">P</div><div class="t" style="left:713.7px;top:1297.1px;font-size:50.15px;line-height:50.15px;font-weight:normal;color:#7b7b7b;transform:scaleX(0.9500);transform-origin:0 0;">Stop</div><svg style="position:absolute;left:1452.8px;top:1303.1px;width:37px;height:38px;color:#7b7b7b;overflow:visible"><use href="#cmd" xlink:href="#cmd"/></svg><div class="t" style="left:1497.8px;top:1297.1px;font-size:50.15px;line-height:50.15px;font-weight:normal;color:#7b7b7b;">.</div><div style="position:absolute;left:1569px;top:370px;width:523px;height:450px;background:#363636;border-radius:13px;box-shadow:0 0 0 2px #111, inset 0 0 0 3px #4b4b4b, 0 25px 50px 10px rgba(0,0,0,0.33)"></div><div class="t" style="left:1641.0px;top:387.1px;font-size:50.15px;line-height:50.15px;font-weight:normal;color:#ffffff;transform:scaleX(0.9500);transform-origin:0 0;">Images…</div><svg style="position:absolute;left:1987.0px;top:393.1px;width:37px;height:38px;color:#ffffff;overflow:visible"><use href="#cmd" xlink:href="#cmd"/></svg><svg style="position:absolute;left:1935.0px;top:394.2px;width:41px;height:36px;color:#ffffff;overflow:visible"><use href="#opt" xlink:href="#opt"/></svg><div class="t" style="left:2032.0px;top:387.1px;font-size:50.15px;line-height:50.15px;font-weight:normal;color:#ffffff;">I</div><div class="t" style="left:1641.0px;top:451.5px;font-size:50.15px;line-height:50.15px;font-weight:normal;color:#ffffff;transform:scaleX(0.9500);transform-origin:0 0;">Movie…</div><svg style="position:absolute;left:1987.0px;top:457.5px;width:37px;height:38px;color:#ffffff;overflow:visible"><use href="#cmd" xlink:href="#cmd"/></svg><svg style="position:absolute;left:1935.0px;top:458.6px;width:41px;height:36px;color:#ffffff;overflow:visible"><use href="#opt" xlink:href="#opt"/></svg><div class="t" style="left:2032.0px;top:451.5px;font-size:50.15px;line-height:50.15px;font-weight:normal;color:#ffffff;">M</div><div class="t" style="left:1641.0px;top:515.5px;font-size:50.15px;line-height:50.15px;font-weight:normal;color:#ffffff;transform:scaleX(0.9500);transform-origin:0 0;">Audio…</div><svg style="position:absolute;left:1987.0px;top:521.5px;width:37px;height:38px;color:#ffffff;overflow:visible"><use href="#cmd" xlink:href="#cmd"/></svg><svg style="position:absolute;left:1935.0px;top:522.6px;width:41px;height:36px;color:#ffffff;overflow:visible"><use href="#opt" xlink:href="#opt"/></svg><div class="t" style="left:2032.0px;top:515.5px;font-size:50.15px;line-height:50.15px;font-weight:normal;color:#ffffff;">A</div><div class="t" style="left:1641.0px;top:579.5px;font-size:50.15px;line-height:50.15px;font-weight:normal;color:#ffffff;transform:scaleX(0.9500);transform-origin:0 0;">Title…</div><svg style="position:absolute;left:1987.0px;top:585.5px;width:37px;height:38px;color:#ffffff;overflow:visible"><use href="#cmd" xlink:href="#cmd"/></svg><svg style="position:absolute;left:1935.0px;top:586.6px;width:41px;height:36px;color:#ffffff;overflow:visible"><use href="#opt" xlink:href="#opt"/></svg><div class="t" style="left:2032.0px;top:579.5px;font-size:50.15px;line-height:50.15px;font-weight:normal;color:#ffffff;">T</div><div class="t" style="left:1641.0px;top:682.5px;font-size:50.15px;line-height:50.15px;font-weight:normal;color:#ffffff;transform:scaleX(0.9500);transform-origin:0 0;">Blank Slide</div><svg style="position:absolute;left:1987.0px;top:688.5px;width:37px;height:38px;color:#ffffff;overflow:visible"><use href="#cmd" xlink:href="#cmd"/></svg><svg style="position:absolute;left:1950.0px;top:689.5px;width:29px;height:19px;color:#ffffff;overflow:visible"><use href="#ctl" xlink:href="#ctl"/></svg><div class="t" style="left:2032.0px;top:682.5px;font-size:50.15px;line-height:50.15px;font-weight:normal;color:#ffffff;">B</div><div class="t" style="left:1641.0px;top:746.5px;font-size:50.15px;line-height:50.15px;font-weight:normal;color:#ffffff;transform:scaleX(0.9500);transform-origin:0 0;">New Title</div><svg style="position:absolute;left:1987.0px;top:752.5px;width:37px;height:38px;color:#ffffff;overflow:visible"><use href="#cmd" xlink:href="#cmd"/></svg><svg style="position:absolute;left:1950.0px;top:753.5px;width:29px;height:19px;color:#ffffff;overflow:visible"><use href="#ctl" xlink:href="#ctl"/></svg><div class="t" style="left:2032.0px;top:746.5px;font-size:50.15px;line-height:50.15px;font-weight:normal;color:#ffffff;">T</div><div style="position:absolute;left:1572px;top:656px;width:517px;height:6px;background:#575757"></div><div class="ab" style="left:0;top:0;width:2096px;height:1384px;background:rgba(101,101,101,0.70)"></div></div><div style="position:absolute;left:2405px;top:493px;width:2102px;height:6px;background:#999999"></div><div style="position:absolute;left:2405px;top:1877px;width:2102px;height:6px;background:#999999"></div><div style="position:absolute;left:2405px;top:493px;width:6px;height:1390px;background:#999999"></div><div style="position:absolute;left:4501px;top:493px;width:6px;height:1390px;background:#999999"></div><div style="position:absolute;left:2402px;top:490px;width:12px;height:12px;background:#999999;box-shadow:0 0 0 1px #3a3a3a"></div><div style="position:absolute;left:4498px;top:490px;width:12px;height:12px;background:#999999;box-shadow:0 0 0 1px #3a3a3a"></div><div style="position:absolute;left:2402px;top:1874px;width:12px;height:12px;background:#999999;box-shadow:0 0 0 1px #3a3a3a"></div><div style="position:absolute;left:4498px;top:1874px;width:12px;height:12px;background:#999999;box-shadow:0 0 0 1px #3a3a3a"></div><div class="ab" style="left:2408px;top:625px;width:2096px;height:1179px;overflow:hidden;background:#000"><div class="ab lay" style="left:0px;top:-129px;width:2096px;height:1384px"><div style="position:absolute;left:0px;top:0px;width:2096px;height:1034px;background:#474747"></div><div style="position:absolute;left:0px;top:1034px;width:2096px;height:350px;background:#000"></div><div style="position:absolute;left:0px;top:1032px;width:2096px;height:3px;background:#2c2c2c"></div><div style="position:absolute;left:0px;top:0px;width:5px;height:1384px;background:#333333"></div><div class="t" style="left:1687.0px;top:134.2px;font-size:68.32px;line-height:68.32px;font-weight:bold;color:#858585;">Start</div><div style="position:absolute;left:0px;top:0px;width:2096px;height:74px;background:#242424"></div><div style="position:absolute;left:0px;top:74px;width:2096px;height:4px;background:#5a5a5a"></div><div style="position:absolute;left:641px;top:0px;width:282px;height:74px;background:#2358d6"></div><div class="t" style="left:15.0px;top:11.7px;font-size:50.87px;line-height:50.87px;font-weight:bold;color:#ffffff;transform:scaleX(0.9487);transform-origin:0 0;">FotoMagico 5</div><div class="t" style="left:392.6px;top:11.7px;font-size:50.87px;line-height:50.87px;font-weight:normal;color:#ffffff;transform:scaleX(0.8711);transform-origin:0 0;">File</div><div class="t" style="left:529.0px;top:11.7px;font-size:50.87px;line-height:50.87px;font-weight:normal;color:#ffffff;transform:scaleX(0.9240);transform-origin:0 0;">Edit</div><div class="t" style="left:673.5px;top:11.7px;font-size:50.87px;line-height:50.87px;font-weight:normal;color:#ffffff;transform:scaleX(0.9376);transform-origin:0 0;">Slideshow</div><div class="t" style="left:955.6px;top:11.7px;font-size:50.87px;line-height:50.87px;font-weight:normal;color:#ffffff;transform:scaleX(0.9540);transform-origin:0 0;">Text</div><div class="t" style="left:1109.7px;top:11.7px;font-size:50.87px;line-height:50.87px;font-weight:normal;color:#ffffff;transform:scaleX(0.9392);transform-origin:0 0;">View</div><div class="t" style="left:1278.4px;top:11.7px;font-size:50.87px;line-height:50.87px;font-weight:normal;color:#ffffff;transform:scaleX(0.9083);transform-origin:0 0;">Share</div><div class="t" style="left:1465.3px;top:11.7px;font-size:50.87px;line-height:50.87px;font-weight:normal;color:#ffffff;transform:scaleX(0.9462);transform-origin:0 0;">Window</div><div class="t" style="left:1700.0px;top:11.7px;font-size:50.87px;line-height:50.87px;font-weight:normal;color:#ffffff;transform:scaleX(0.9501);transform-origin:0 0;">Help</div><div style="position:absolute;left:642px;top:78px;width:925px;height:1292px;background:#363636;border-radius:0 0 17px 17px;box-shadow:-2px 0 0 0 #111, 2px 0 0 0 #111, 0 2px 0 0 #111, inset 3px 0 0 0 #4b4b4b, inset -3px 0 0 0 #4b4b4b, inset 0 -3px 0 0 #4b4b4b, -20px 20px 50px 10px rgba(0,0,0,0.33)"></div><div class="t" style="left:713.7px;top:92.1px;font-size:50.15px;line-height:50.15px;font-weight:normal;color:#ffffff;transform:scaleX(0.9121);transform-origin:0 0;">Settings…</div><svg style="position:absolute;left:1452.8px;top:98.1px;width:37px;height:38px;color:#ffffff;overflow:visible"><use href="#cmd" xlink:href="#cmd"/></svg><svg style="position:absolute;left:1400.8px;top:99.2px;width:41px;height:36px;color:#ffffff;overflow:visible"><use href="#opt" xlink:href="#opt"/></svg><div class="t" style="left:1497.8px;top:92.1px;font-size:50.15px;line-height:50.15px;font-weight:normal;color:#ffffff;">0</div><div class="t" style="left:713.7px;top:156.1px;font-size:50.15px;line-height:50.15px;font-weight:normal;color:#7b7b7b;transform:scaleX(0.9452);transform-origin:0 0;">Animation Assistant…</div><svg style="position:absolute;left:1452.8px;top:162.1px;width:37px;height:38px;color:#7b7b7b;overflow:visible"><use href="#cmd" xlink:href="#cmd"/></svg><svg style="position:absolute;left:1400.8px;top:163.2px;width:41px;height:36px;color:#7b7b7b;overflow:visible"><use href="#opt" xlink:href="#opt"/></svg><div class="t" style="left:1497.8px;top:156.1px;font-size:50.15px;line-height:50.15px;font-weight:normal;color:#7b7b7b;">1</div><div class="t" style="left:713.7px;top:220.1px;font-size:50.15px;line-height:50.15px;font-weight:normal;color:#7b7b7b;transform:scaleX(0.9450);transform-origin:0 0;">Audio Marker Assistant…</div><svg style="position:absolute;left:1452.8px;top:226.1px;width:37px;height:38px;color:#7b7b7b;overflow:visible"><use href="#cmd" xlink:href="#cmd"/></svg><svg style="position:absolute;left:1400.8px;top:227.2px;width:41px;height:36px;color:#7b7b7b;overflow:visible"><use href="#opt" xlink:href="#opt"/></svg><div class="t" style="left:1497.8px;top:220.1px;font-size:50.15px;line-height:50.15px;font-weight:normal;color:#7b7b7b;">2</div><div class="t" style="left:713.7px;top:284.1px;font-size:50.15px;line-height:50.15px;font-weight:normal;color:#ffffff;transform:scaleX(0.9496);transform-origin:0 0;">Record Narration Assistant…</div><svg style="position:absolute;left:1452.8px;top:290.1px;width:37px;height:38px;color:#ffffff;overflow:visible"><use href="#cmd" xlink:href="#cmd"/></svg><svg style="position:absolute;left:1400.8px;top:291.2px;width:41px;height:36px;color:#ffffff;overflow:visible"><use href="#opt" xlink:href="#opt"/></svg><div class="t" style="left:1497.8px;top:284.1px;font-size:50.15px;line-height:50.15px;font-weight:normal;color:#ffffff;">3</div><div style="position:absolute;left:645px;top:360px;width:919px;height:6px;background:#575757"></div><div style="position:absolute;left:642px;top:383px;width:925px;height:64px;background:#2358d6"></div><div class="t" style="left:713.7px;top:387.1px;font-size:50.15px;line-height:50.15px;font-weight:normal;color:#ffffff;transform:scaleX(0.9649);transform-origin:0 0;">Insert</div><div style="position:absolute;left:1488.0px;top:399.0px;width:0;height:0;border-left:30px solid #ffffff;border-top:16.0px solid transparent;border-bottom:16.0px solid transparent"></div><div class="t" style="left:713.7px;top:451.1px;font-size:50.15px;line-height:50.15px;font-weight:normal;color:#ffffff;transform:scaleX(0.9500);transform-origin:0 0;">Chapter</div><div style="position:absolute;left:1488.0px;top:463.0px;width:0;height:0;border-left:30px solid #dedede;border-top:16.0px solid transparent;border-bottom:16.0px solid transparent"></div><div class="t" style="left:713.7px;top:515.1px;font-size:50.15px;line-height:50.15px;font-weight:normal;color:#ffffff;transform:scaleX(0.9500);transform-origin:0 0;">Match</div><div style="position:absolute;left:1488.0px;top:527.0px;width:0;height:0;border-left:30px solid #dedede;border-top:16.0px solid transparent;border-bottom:16.0px solid transparent"></div><div class="t" style="left:713.7px;top:579.1px;font-size:50.15px;line-height:50.15px;font-weight:normal;color:#ffffff;transform:scaleX(0.9500);transform-origin:0 0;">Audio</div><div style="position:absolute;left:1488.0px;top:591.0px;width:0;height:0;border-left:30px solid #dedede;border-top:16.0px solid transparent;border-bottom:16.0px solid transparent"></div><div style="position:absolute;left:645px;top:655px;width:919px;height:6px;background:#575757"></div><div class="t" style="left:713.7px;top:682.1px;font-size:50.15px;line-height:50.15px;font-weight:normal;color:#ffffff;transform:scaleX(0.9500);transform-origin:0 0;">Animation</div><div style="position:absolute;left:1488.0px;top:694.0px;width:0;height:0;border-left:30px solid #dedede;border-top:16.0px solid transparent;border-bottom:16.0px solid transparent"></div><div class="t" style="left:713.7px;top:746.1px;font-size:50.15px;line-height:50.15px;font-weight:normal;color:#ffffff;transform:scaleX(0.9500);transform-origin:0 0;">Zoom</div><div style="position:absolute;left:1488.0px;top:758.0px;width:0;height:0;border-left:30px solid #dedede;border-top:16.0px solid transparent;border-bottom:16.0px solid transparent"></div><div class="t" style="left:713.7px;top:810.1px;font-size:50.15px;line-height:50.15px;font-weight:normal;color:#ffffff;transform:scaleX(0.9500);transform-origin:0 0;">Layer</div><div style="position:absolute;left:1488.0px;top:822.0px;width:0;height:0;border-left:30px solid #dedede;border-top:16.0px solid transparent;border-bottom:16.0px solid transparent"></div><div class="t" style="left:713.7px;top:874.1px;font-size:50.15px;line-height:50.15px;font-weight:normal;color:#ffffff;transform:scaleX(0.9500);transform-origin:0 0;">Mask</div><div style="position:absolute;left:1488.0px;top:886.0px;width:0;height:0;border-left:30px solid #dedede;border-top:16.0px solid transparent;border-bottom:16.0px solid transparent"></div><div class="t" style="left:713.7px;top:938.1px;font-size:50.15px;line-height:50.15px;font-weight:normal;color:#ffffff;transform:scaleX(0.9500);transform-origin:0 0;">Continue</div><div style="position:absolute;left:1488.0px;top:950.0px;width:0;height:0;border-left:30px solid #dedede;border-top:16.0px solid transparent;border-bottom:16.0px solid transparent"></div><div class="t" style="left:713.7px;top:1002.1px;font-size:50.15px;line-height:50.15px;font-weight:normal;color:#ffffff;transform:scaleX(0.9500);transform-origin:0 0;">Transition</div><div style="position:absolute;left:1488.0px;top:1014.0px;width:0;height:0;border-left:30px solid #dedede;border-top:16.0px solid transparent;border-bottom:16.0px solid transparent"></div><div style="position:absolute;left:645px;top:1078px;width:919px;height:6px;background:#575757"></div><div class="t" style="left:713.7px;top:1105.1px;font-size:50.15px;line-height:50.15px;font-weight:normal;color:#ffffff;transform:scaleX(0.9500);transform-origin:0 0;">Go to</div><div style="position:absolute;left:1488.0px;top:1117.0px;width:0;height:0;border-left:30px solid #dedede;border-top:16.0px solid transparent;border-bottom:16.0px solid transparent"></div><div class="t" style="left:713.7px;top:1169.1px;font-size:50.15px;line-height:50.15px;font-weight:normal;color:#7b7b7b;transform:scaleX(0.9500);transform-origin:0 0;">Play Preview</div><div class="t" style="left:1401.7px;top:1169.1px;font-size:50.15px;line-height:50.15px;font-weight:normal;color:#7b7b7b;transform:scaleX(0.9354);transform-origin:0 0;">Space</div><div class="t" style="left:713.7px;top:1233.1px;font-size:50.15px;line-height:50.15px;font-weight:normal;color:#7b7b7b;transform:scaleX(0.9500);transform-origin:0 0;">Play Fullscreen…</div><svg style="position:absolute;left:1452.8px;top:1239.1px;width:37px;height:38px;color:#7b7b7b;overflow:visible"><use href="#cmd" xlink:href="#cmd"/></svg><div class="t" style="left:1497.8px;top:1233.1px;font-size:50.15px;line-height:50.15px;font-weight:normal;color:#7b7b7b;">P</div><div class="t" style="left:713.7px;top:1297.1px;font-size:50.15px;line-height:50.15px;font-weight:normal;color:#7b7b7b;transform:scaleX(0.9500);transform-origin:0 0;">Stop</div><svg style="position:absolute;left:1452.8px;top:1303.1px;width:37px;height:38px;color:#7b7b7b;overflow:visible"><use href="#cmd" xlink:href="#cmd"/></svg><div class="t" style="left:1497.8px;top:1297.1px;font-size:50.15px;line-height:50.15px;font-weight:normal;color:#7b7b7b;">.</div><div style="position:absolute;left:1569px;top:370px;width:523px;height:450px;background:#363636;border-radius:13px;box-shadow:0 0 0 2px #111, inset 0 0 0 3px #4b4b4b, 0 25px 50px 10px rgba(0,0,0,0.33)"></div><div class="t" style="left:1641.0px;top:387.1px;font-size:50.15px;line-height:50.15px;font-weight:normal;color:#ffffff;transform:scaleX(0.9500);transform-origin:0 0;">Images…</div><svg style="position:absolute;left:1987.0px;top:393.1px;width:37px;height:38px;color:#ffffff;overflow:visible"><use href="#cmd" xlink:href="#cmd"/></svg><svg style="position:absolute;left:1935.0px;top:394.2px;width:41px;height:36px;color:#ffffff;overflow:visible"><use href="#opt" xlink:href="#opt"/></svg><div class="t" style="left:2032.0px;top:387.1px;font-size:50.15px;line-height:50.15px;font-weight:normal;color:#ffffff;">I</div><div class="t" style="left:1641.0px;top:451.5px;font-size:50.15px;line-height:50.15px;font-weight:normal;color:#ffffff;transform:scaleX(0.9500);transform-origin:0 0;">Movie…</div><svg style="position:absolute;left:1987.0px;top:457.5px;width:37px;height:38px;color:#ffffff;overflow:visible"><use href="#cmd" xlink:href="#cmd"/></svg><svg style="position:absolute;left:1935.0px;top:458.6px;width:41px;height:36px;color:#ffffff;overflow:visible"><use href="#opt" xlink:href="#opt"/></svg><div class="t" style="left:2032.0px;top:451.5px;font-size:50.15px;line-height:50.15px;font-weight:normal;color:#ffffff;">M</div><div class="t" style="left:1641.0px;top:515.5px;font-size:50.15px;line-height:50.15px;font-weight:normal;color:#ffffff;transform:scaleX(0.9500);transform-origin:0 0;">Audio…</div><svg style="position:absolute;left:1987.0px;top:521.5px;width:37px;height:38px;color:#ffffff;overflow:visible"><use href="#cmd" xlink:href="#cmd"/></svg><svg style="position:absolute;left:1935.0px;top:522.6px;width:41px;height:36px;color:#ffffff;overflow:visible"><use href="#opt" xlink:href="#opt"/></svg><div class="t" style="left:2032.0px;top:515.5px;font-size:50.15px;line-height:50.15px;font-weight:normal;color:#ffffff;">A</div><div class="t" style="left:1641.0px;top:579.5px;font-size:50.15px;line-height:50.15px;font-weight:normal;color:#ffffff;transform:scaleX(0.9500);transform-origin:0 0;">Title…</div><svg style="position:absolute;left:1987.0px;top:585.5px;width:37px;height:38px;color:#ffffff;overflow:visible"><use href="#cmd" xlink:href="#cmd"/></svg><svg style="position:absolute;left:1935.0px;top:586.6px;width:41px;height:36px;color:#ffffff;overflow:visible"><use href="#opt" xlink:href="#opt"/></svg><div class="t" style="left:2032.0px;top:579.5px;font-size:50.15px;line-height:50.15px;font-weight:normal;color:#ffffff;">T</div><div class="t" style="left:1641.0px;top:682.5px;font-size:50.15px;line-height:50.15px;font-weight:normal;color:#ffffff;transform:scaleX(0.9500);transform-origin:0 0;">Blank Slide</div><svg style="position:absolute;left:1987.0px;top:688.5px;width:37px;height:38px;color:#ffffff;overflow:visible"><use href="#cmd" xlink:href="#cmd"/></svg><svg style="position:absolute;left:1950.0px;top:689.5px;width:29px;height:19px;color:#ffffff;overflow:visible"><use href="#ctl" xlink:href="#ctl"/></svg><div class="t" style="left:2032.0px;top:682.5px;font-size:50.15px;line-height:50.15px;font-weight:normal;color:#ffffff;">B</div><div class="t" style="left:1641.0px;top:746.5px;font-size:50.15px;line-height:50.15px;font-weight:normal;color:#ffffff;transform:scaleX(0.9500);transform-origin:0 0;">New Title</div><svg style="position:absolute;left:1987.0px;top:752.5px;width:37px;height:38px;color:#ffffff;overflow:visible"><use href="#cmd" xlink:href="#cmd"/></svg><svg style="position:absolute;left:1950.0px;top:753.5px;width:29px;height:19px;color:#ffffff;overflow:visible"><use href="#ctl" xlink:href="#ctl"/></svg><div class="t" style="left:2032.0px;top:746.5px;font-size:50.15px;line-height:50.15px;font-weight:normal;color:#ffffff;">T</div><div style="position:absolute;left:1572px;top:656px;width:517px;height:6px;background:#575757"></div></div><div style="position:absolute;left:-3px;top:-132px;width:2102px;height:6px;background:#ffffff"></div><div style="position:absolute;left:-3px;top:1252px;width:2102px;height:6px;background:#ffffff"></div><div style="position:absolute;left:-3px;top:-132px;width:6px;height:1390px;background:#ffffff"></div><div style="position:absolute;left:2093px;top:-132px;width:6px;height:1390px;background:#ffffff"></div><div style="position:absolute;left:-6px;top:-135px;width:12px;height:12px;background:#ffffff;box-shadow:0 0 0 1px #3a3a3a"></div><div style="position:absolute;left:2090px;top:-135px;width:12px;height:12px;background:#ffffff;box-shadow:0 0 0 1px #3a3a3a"></div><div style="position:absolute;left:-6px;top:1249px;width:12px;height:12px;background:#ffffff;box-shadow:0 0 0 1px #3a3a3a"></div><div style="position:absolute;left:2090px;top:1249px;width:12px;height:12px;background:#ffffff;box-shadow:0 0 0 1px #3a3a3a"></div></div><div style="position:absolute;left:4608px;top:0px;width:512px;height:2430px;background:linear-gradient(#2b2b2b,#3b3b3b)"></div><div style="position:absolute;left:4608px;top:0px;width:2px;height:2430px;background:#787878"></div><div style="position:absolute;left:4610px;top:0px;width:510px;height:2px;background:#7a7a7a"></div><div class="ab" style="left:4624px;top:16.6px;width:0;height:0;border-top:15px solid #8d8d8d;border-left:9px solid transparent;border-right:9px solid transparent"></div><div class="t" style="left:4652.4px;top:9.5px;font-size:27.33px;line-height:27.33px;font-weight:bold;color:#f2f2f2;transform:scaleX(0.9648);transform-origin:0 0;">Slide</div><svg class="ab" style="left:5076px;top:13.600000000000001px;width:30px;height:22px" viewBox="0 0 30 22"><path d="M4,10 V6 A6,6 0 0 1 16,6" fill="none" stroke="#3e3e3e" stroke-width="3"/><rect x="11" y="9" width="18" height="13" fill="#3e3e3e"/></svg><div class="t" style="left:4656.9px;top:70.1px;font-size:24.13px;line-height:24.13px;font-weight:normal;color:#c5c5c5;transform:scaleX(0.9289);transform-origin:0 0;">Animation:</div><div style="position:absolute;left:4776px;top:69px;width:25.5px;height:26px;border:1.5px solid #8a8a8a;border-radius:4px;background:#3a3a3a"></div><svg class="ab" style="left:4778px;top:66px;width:26px;height:28px" viewBox="0 0 26 28"><path d="M4,15 L10,23 L22,3" fill="none" stroke="#d8d8d8" stroke-width="3.2"/></svg><div class="t" style="left:4812.5px;top:70.1px;font-size:24.13px;line-height:24.13px;font-weight:normal;color:#c5c5c5;transform:scaleX(0.9261);transform-origin:0 0;">Enabled</div><div class="t" style="left:4671.9px;top:127.3px;font-size:24.13px;line-height:24.13px;font-weight:normal;color:#c5c5c5;transform:scaleX(0.9289);transform-origin:0 0;">Duration:</div><div style="position:absolute;left:4776px;top:136px;width:224px;height:10px;background:#5e5e5e;border-radius:5px;box-shadow:inset 0 1px 1px rgba(0,0,0,0.3)"></div><div style="position:absolute;left:4776px;top:136px;width:122px;height:10px;background:#4a8df0;border-radius:5px"></div><svg class="ab" style="left:4884px;top:125px;width:20px;height:28px" viewBox="0 0 20 28"><defs><linearGradient id="kg" x1="0" y1="0" x2="0" y2="1"><stop offset="0" stop-color="#e2e2e2"/><stop offset="1" stop-color="#b0b0b0"/></linearGradient></defs><path d="M1,9 L10,1 L19,9 V25 Q19,27 17,27 H3 Q1,27 1,25 Z" fill="url(#kg)" stroke="#7a7a7a" stroke-width="1"/></svg><div class="t" style="left:5021.0px;top:127.3px;font-size:24.13px;line-height:24.13px;font-weight:normal;color:#c5c5c5;">12.9s</div><div class="t" style="left:4666.9px;top:185.2px;font-size:24.13px;line-height:24.13px;font-weight:normal;color:#c5c5c5;transform:scaleX(0.9289);transform-origin:0 0;">Continue:</div><div class="ab" style="left:4776px;top:180px;width:304px;height:36px;border-radius:6px;background:linear-gradient(#4c4c4c,#3c3c3c);box-shadow:0 0 0 1.5px #7a7a7a, 0 0 0 2.5px #1e1e1e, inset 0 1px 0 rgba(255,255,255,0.12)"></div><div class="t" style="left:4792.7px;top:185.2px;font-size:24.13px;line-height:24.13px;font-weight:normal;color:#ececec;transform:scaleX(0.9489);transform-origin:0 0;">After Duration</div><svg class="ab" style="left:5053px;top:185.0px;width:16px;height:26px" viewBox="0 0 16 26"><path d="M2,9 L8,3 L14,9 M2,17 L8,23 L14,17" fill="none" stroke="#d0d0d0" stroke-width="2.4"/></svg><div class="t" style="left:4696.8px;top:244.0px;font-size:24.13px;line-height:24.13px;font-weight:normal;color:#c5c5c5;transform:scaleX(0.9289);transform-origin:0 0;">Name:</div><div class="t" style="left:4698.0px;top:301.1px;font-size:24.13px;line-height:24.13px;font-weight:normal;color:#c5c5c5;transform:scaleX(0.9289);transform-origin:0 0;">Notes:</div><div class="ab" style="left:4670px;top:304px;width:0;height:0;border-left:15px solid #8d8d8d;border-top:9px solid transparent;border-bottom:9px solid transparent"></div><svg class="ab" style="left:4900px;top:0px;width:220px;height:260px" viewBox="4900 0 220 260"><polygon points="4964,46 5043,46 5120,123 5120,202" fill="#3f82e2"/><polygon points="4964,46 5043,46 5120,123 5120,202" fill="none" stroke="rgba(0,0,0,0.25)" stroke-width="1"/><text x="0" y="0" transform="translate(5059,107) rotate(45)" text-anchor="middle" dominant-baseline="middle" font-family="Liberation Sans" font-weight="bold" font-size="33" fill="#ffffff" stroke="#ffffff" stroke-width="1.6" textLength="112" lengthAdjust="spacingAndGlyphs" style="filter:drop-shadow(1px 2px 1px rgba(0,0,0,0.35))">NEWS</text></svg><div style="position:absolute;left:4610px;top:368px;width:510px;height:2px;background:#4a4a4a"></div><div class="ab" style="left:4624px;top:386px;width:0;height:0;border-top:15px solid #8d8d8d;border-left:9px solid transparent;border-right:9px solid transparent"></div><div class="t" style="left:4652.4px;top:378.9px;font-size:27.33px;line-height:27.33px;font-weight:bold;color:#f2f2f2;transform:scaleX(0.9827);transform-origin:0 0;">Transition</div><svg class="ab" style="left:5076px;top:383px;width:30px;height:22px" viewBox="0 0 30 22"><path d="M4,10 V6 A6,6 0 0 1 16,6" fill="none" stroke="#3e3e3e" stroke-width="3"/><rect x="11" y="9" width="18" height="13" fill="#3e3e3e"/></svg><div class="t" style="left:4708.0px;top:437.6px;font-size:24.13px;line-height:24.13px;font-weight:normal;color:#c5c5c5;transform:scaleX(0.9289);transform-origin:0 0;">Type:</div><div class="ab" style="left:4776px;top:432.3px;width:304px;height:35.3px;border-radius:6px;background:linear-gradient(#4c4c4c,#3c3c3c);box-shadow:0 0 0 1.5px #7a7a7a, 0 0 0 2.5px #1e1e1e, inset 0 1px 0 rgba(255,255,255,0.12)"></div><svg class="ab" style="left:4798px;top:436px;width:26px;height:26px" viewBox="0 0 26 26"><rect x="1" y="1" width="24" height="24" fill="#e8b840" stroke="#b88a28" stroke-width="2"/><polygon points="3,3 23,3 13,13" fill="#fbe98a"/><polygon points="3,23 23,23 13,13" fill="#fbe98a"/></svg><div class="t" style="left:4838.7px;top:437.6px;font-size:24.13px;line-height:24.13px;font-weight:normal;color:#ececec;transform:scaleX(0.9489);transform-origin:0 0;">Dissolve</div><svg class="ab" style="left:5053px;top:436.95px;width:16px;height:26px" viewBox="0 0 16 26"><path d="M2,9 L8,3 L14,9 M2,17 L8,23 L14,17" fill="none" stroke="#d0d0d0" stroke-width="2.4"/></svg><div class="t" style="left:4671.9px;top:495.6px;font-size:24.13px;line-height:24.13px;font-weight:normal;color:#c5c5c5;transform:scaleX(0.9289);transform-origin:0 0;">Duration:</div><div style="position:absolute;left:4776px;top:504px;width:224px;height:10px;background:#5e5e5e;border-radius:5px;box-shadow:inset 0 1px 1px rgba(0,0,0,0.3)"></div><div style="position:absolute;left:4776px;top:504px;width:25px;height:10px;background:#4a8df0;border-radius:5px"></div><svg class="ab" style="left:4787px;top:493px;width:20px;height:28px" viewBox="0 0 20 28"><defs><linearGradient id="kg" x1="0" y1="0" x2="0" y2="1"><stop offset="0" stop-color="#e2e2e2"/><stop offset="1" stop-color="#b0b0b0"/></linearGradient></defs><path d="M1,9 L10,1 L19,9 V25 Q19,27 17,27 H3 Q1,27 1,25 Z" fill="url(#kg)" stroke="#7a7a7a" stroke-width="1"/></svg><div class="t" style="left:5029.1px;top:495.6px;font-size:24.13px;line-height:24.13px;font-weight:normal;color:#c5c5c5;">1.0s</div><div style="position:absolute;left:4610px;top:564px;width:510px;height:2px;background:#4a4a4a"></div><div class="ab" style="left:4624px;top:582px;width:0;height:0;border-top:15px solid #8d8d8d;border-left:9px solid transparent;border-right:9px solid transparent"></div><div class="t" style="left:4652.4px;top:574.9px;font-size:27.33px;line-height:27.33px;font-weight:bold;color:#f2f2f2;transform:scaleX(0.9463);transform-origin:0 0;">Layer</div><svg class="ab" style="left:5076px;top:579px;width:30px;height:22px" viewBox="0 0 30 22"><path d="M4,10 V6 A6,6 0 0 1 16,6" fill="none" stroke="#3e3e3e" stroke-width="3"/><rect x="11" y="9" width="18" height="13" fill="#3e3e3e"/></svg><div class="t" style="left:4637.0px;top:633.6px;font-size:24.13px;line-height:24.13px;font-weight:normal;color:#c5c5c5;transform:scaleX(0.9289);transform-origin:0 0;">Blend Mode:</div><div class="ab" style="left:4776px;top:628.3px;width:304px;height:35.3px;border-radius:6px;background:linear-gradient(#4c4c4c,#3c3c3c);box-shadow:0 0 0 1.5px #7a7a7a, 0 0 0 2.5px #1e1e1e, inset 0 1px 0 rgba(255,255,255,0.12)"></div><div class="t" style="left:4792.7px;top:633.6px;font-size:24.13px;line-height:24.13px;font-weight:normal;color:#ececec;transform:scaleX(0.9489);transform-origin:0 0;">Normal</div><svg class="ab" style="left:5053px;top:632.9499999999999px;width:16px;height:26px" viewBox="0 0 16 26"><path d="M2,9 L8,3 L14,9 M2,17 L8,23 L14,17" fill="none" stroke="#d0d0d0" stroke-width="2.4"/></svg><div class="t" style="left:4703.0px;top:691.6px;font-size:24.13px;line-height:24.13px;font-weight:normal;color:#c5c5c5;transform:scaleX(0.9289);transform-origin:0 0;">Mask:</div><div class="ab" style="left:4776px;top:686px;width:224px;height:35.6px;border-radius:6px;background:linear-gradient(#4c4c4c,#3c3c3c);box-shadow:0 0 0 1.5px #7a7a7a, 0 0 0 2.5px #1e1e1e, inset 0 1px 0 rgba(255,255,255,0.12)"></div><div class="ab" style="left:4836px;top:694px;width:32px;height:27px;border:1.5px dashed #bdbdbd"></div><div class="t" style="left:4879.6px;top:691.6px;font-size:24.13px;line-height:24.13px;font-weight:normal;color:#ececec;transform:scaleX(0.9489);transform-origin:0 0;">None</div><div class="ab" style="left:5036px;top:686px;width:44px;height:35.5px;border-radius:6px;background:linear-gradient(#4c4c4c,#3c3c3c);box-shadow:0 0 0 1.5px #7a7a7a, 0 0 0 2.5px #1e1e1e, inset 0 1px 0 rgba(255,255,255,0.12)"></div><svg class="ab" style="left:5053px;top:690.75px;width:16px;height:26px" viewBox="0 0 16 26"><path d="M2,9 L8,3 L14,9 M2,17 L8,23 L14,17" fill="none" stroke="#d0d0d0" stroke-width="2.4"/></svg><div class="t" style="left:4676.0px;top:749.3px;font-size:24.13px;line-height:24.13px;font-weight:normal;color:#c5c5c5;transform:scaleX(0.9289);transform-origin:0 0;">Visibility:</div><div style="position:absolute;left:4776px;top:744.3px;width:224px;height:35px;background:#3a3a3a;border-top:2px solid #e8e8e8;box-shadow:0 0 0 1px #555"></div><div style="position:absolute;left:4776px;top:746.3px;width:17px;height:33px;background:#6b5f3c"></div><div style="position:absolute;left:4983px;top:746.3px;width:17px;height:33px;background:#6b5f3c"></div><div style="position:absolute;left:4809px;top:746.3px;width:1px;height:33px;background:#555"></div><div style="position:absolute;left:4825px;top:746.3px;width:1px;height:33px;background:#555"></div><div style="position:absolute;left:4841px;top:746.3px;width:1px;height:33px;background:#555"></div><div style="position:absolute;left:4857px;top:746.3px;width:1px;height:33px;background:#555"></div><div style="position:absolute;left:4872px;top:746.3px;width:1px;height:33px;background:#555"></div><div style="position:absolute;left:4888px;top:746.3px;width:1px;height:33px;background:#555"></div><div style="position:absolute;left:4904px;top:746.3px;width:1px;height:33px;background:#555"></div><div style="position:absolute;left:4920px;top:746.3px;width:1px;height:33px;background:#555"></div><div style="position:absolute;left:4936px;top:746.3px;width:1px;height:33px;background:#555"></div><div style="position:absolute;left:4952px;top:746.3px;width:1px;height:33px;background:#555"></div><div style="position:absolute;left:4968px;top:746.3px;width:1px;height:33px;background:#555"></div><div style="position:absolute;left:4984px;top:746.3px;width:1px;height:33px;background:#555"></div><svg class="ab" style="left:4760px;top:779.3px;width:36px;height:18px" viewBox="0 0 36 18"><polygon points="18,1 35,17 1,17" fill="#9a9a9a" stroke="#5a5a5a" stroke-width="1"/><polygon points="18,1 35,17 18,17" fill="#7a7a7a"/></svg><svg class="ab" style="left:4982px;top:779.3px;width:36px;height:18px" viewBox="0 0 36 18"><polygon points="18,1 35,17 1,17" fill="#9a9a9a" stroke="#5a5a5a" stroke-width="1"/><polygon points="18,1 35,17 18,17" fill="#7a7a7a"/></svg><div class="ab" style="left:5036px;top:744px;width:44px;height:35.5px;border-radius:6px;background:linear-gradient(#4c4c4c,#3c3c3c);box-shadow:0 0 0 1.5px #7a7a7a, 0 0 0 2.5px #1e1e1e, inset 0 1px 0 rgba(255,255,255,0.12)"></div><svg class="ab" style="left:5053px;top:748.75px;width:16px;height:26px" viewBox="0 0 16 26"><path d="M2,9 L8,3 L14,9 M2,17 L8,23 L14,17" fill="none" stroke="#d0d0d0" stroke-width="2.4"/></svg><div class="t" style="left:4656.9px;top:807.2px;font-size:24.13px;line-height:24.13px;font-weight:normal;color:#c5c5c5;transform:scaleX(0.9289);transform-origin:0 0;">Animation:</div><div style="position:absolute;left:4776px;top:802px;width:224px;height:35px;background:#3a3a3a;border-top:2px solid #e8e8e8;box-shadow:0 0 0 1px #555"></div><div style="position:absolute;left:4776px;top:804px;width:17px;height:33px;background:#6b5f3c"></div><div style="position:absolute;left:4983px;top:804px;width:17px;height:33px;background:#6b5f3c"></div><div style="position:absolute;left:4809px;top:804px;width:1px;height:33px;background:#555"></div><div style="position:absolute;left:4825px;top:804px;width:1px;height:33px;background:#555"></div><div style="position:absolute;left:4841px;top:804px;width:1px;height:33px;background:#555"></div><div style="position:absolute;left:4857px;top:804px;width:1px;height:33px;background:#555"></div><div style="position:absolute;left:4872px;top:804px;width:1px;height:33px;background:#555"></div><div style="position:absolute;left:4888px;top:804px;width:1px;height:33px;background:#555"></div><div style="position:absolute;left:4904px;top:804px;width:1px;height:33px;background:#555"></div><div style="position:absolute;left:4920px;top:804px;width:1px;height:33px;background:#555"></div><div style="position:absolute;left:4936px;top:804px;width:1px;height:33px;background:#555"></div><div style="position:absolute;left:4952px;top:804px;width:1px;height:33px;background:#555"></div><div style="position:absolute;left:4968px;top:804px;width:1px;height:33px;background:#555"></div><div style="position:absolute;left:4984px;top:804px;width:1px;height:33px;background:#555"></div><svg class="ab" style="left:4760px;top:837px;width:36px;height:18px" viewBox="0 0 36 18"><polygon points="18,1 35,17 1,17" fill="#9a9a9a" stroke="#5a5a5a" stroke-width="1"/><polygon points="18,1 35,17 18,17" fill="#7a7a7a"/></svg><svg class="ab" style="left:4982px;top:837px;width:36px;height:18px" viewBox="0 0 36 18"><polygon points="18,1 35,17 1,17" fill="#9a9a9a" stroke="#5a5a5a" stroke-width="1"/><polygon points="18,1 35,17 18,17" fill="#7a7a7a"/></svg><div class="ab" style="left:5036px;top:802px;width:44px;height:35.5px;border-radius:6px;background:linear-gradient(#4c4c4c,#3c3c3c);box-shadow:0 0 0 1.5px #7a7a7a, 0 0 0 2.5px #1e1e1e, inset 0 1px 0 rgba(255,255,255,0.12)"></div><svg class="ab" style="left:5053px;top:806.75px;width:16px;height:26px" viewBox="0 0 16 26"><path d="M2,9 L8,3 L14,9 M2,17 L8,23 L14,17" fill="none" stroke="#d0d0d0" stroke-width="2.4"/></svg><div style="position:absolute;left:4610px;top:883px;width:510px;height:2px;background:#4a4a4a"></div><div class="ab" style="left:4624px;top:900px;width:0;height:0;border-top:15px solid #8d8d8d;border-left:9px solid transparent;border-right:9px solid transparent"></div><div class="t" style="left:4652.4px;top:892.9px;font-size:27.33px;line-height:27.33px;font-weight:bold;color:#f2f2f2;transform:scaleX(0.9750);transform-origin:0 0;">Image</div><svg class="ab" style="left:5076px;top:897px;width:30px;height:22px" viewBox="0 0 30 22"><path d="M4,10 V6 A6,6 0 0 1 16,6" fill="none" stroke="#3e3e3e" stroke-width="3"/><rect x="11" y="9" width="18" height="13" fill="#3e3e3e"/></svg><div class="t" style="left:4720.5px;top:951.3px;font-size:24.13px;line-height:24.13px;font-weight:normal;color:#c5c5c5;transform:scaleX(0.9289);transform-origin:0 0;">File:</div><div class="t" style="left:4776.0px;top:951.3px;font-size:24.13px;line-height:24.13px;font-weight:normal;color:#dcdcdc;transform:scaleX(0.9657);transform-origin:0 0;">Screen Shot 2020-05…</div><div class="ab" style="left:5036px;top:946.3px;width:44px;height:35.5px;border-radius:6px;background:linear-gradient(#4c4c4c,#3c3c3c);box-shadow:0 0 0 1.5px #7a7a7a, 0 0 0 2.5px #1e1e1e, inset 0 1px 0 rgba(255,255,255,0.12)"></div><svg class="ab" style="left:5053px;top:951.05px;width:16px;height:26px" viewBox="0 0 16 26"><path d="M2,9 L8,3 L14,9 M2,17 L8,23 L14,17" fill="none" stroke="#d0d0d0" stroke-width="2.4"/></svg><div class="t" style="left:4689.3px;top:1010.1px;font-size:24.13px;line-height:24.13px;font-weight:normal;color:#c5c5c5;transform:scaleX(0.9289);transform-origin:0 0;">Border:</div><div style="position:absolute;left:4776px;top:1003.7px;width:44px;height:36px;background:#000;border:4px solid #444;box-shadow:0 0 0 1px #777"></div><div style="position:absolute;left:4838px;top:1017px;width:162px;height:10px;background:#5e5e5e;border-radius:5px;box-shadow:inset 0 1px 1px rgba(0,0,0,0.3)"></div><svg class="ab" style="left:4839px;top:1006px;width:20px;height:28px" viewBox="0 0 20 28"><defs><linearGradient id="kg" x1="0" y1="0" x2="0" y2="1"><stop offset="0" stop-color="#e2e2e2"/><stop offset="1" stop-color="#b0b0b0"/></linearGradient></defs><path d="M1,9 L10,1 L19,9 V25 Q19,27 17,27 H3 Q1,27 1,25 Z" fill="url(#kg)" stroke="#7a7a7a" stroke-width="1"/></svg><div class="t" style="left:5041.5px;top:1010.1px;font-size:24.13px;line-height:24.13px;font-weight:normal;color:#c5c5c5;">0pt</div><div class="t" style="left:4703.0px;top:1068.1px;font-size:24.13px;line-height:24.13px;font-weight:normal;color:#c5c5c5;transform:scaleX(0.9289);transform-origin:0 0;">Color:</div><div class="ab" style="left:4776px;top:1062px;width:224px;height:35.6px;border-radius:6px;background:linear-gradient(#4c4c4c,#3c3c3c);box-shadow:0 0 0 1.5px #7a7a7a, 0 0 0 2.5px #1e1e1e, inset 0 1px 0 rgba(255,255,255,0.12)"></div><div class="ab" style="left:4830px;top:1068px;width:24px;height:24px;border-radius:50%;background:conic-gradient(#f55,#ff5,#5f5,#5ff,#55f,#f5f,#f55);box-shadow:inset 0 0 6px 3px rgba(255,255,255,0.6)"></div><div class="t" style="left:4864.4px;top:1068.1px;font-size:24.13px;line-height:24.13px;font-weight:normal;color:#ececec;transform:scaleX(0.9489);transform-origin:0 0;">Normal</div><div class="ab" style="left:5036px;top:1062px;width:44px;height:35.5px;border-radius:6px;background:linear-gradient(#4c4c4c,#3c3c3c);box-shadow:0 0 0 1.5px #7a7a7a, 0 0 0 2.5px #1e1e1e, inset 0 1px 0 rgba(255,255,255,0.12)"></div><svg class="ab" style="left:5053px;top:1066.75px;width:16px;height:26px" viewBox="0 0 16 26"><path d="M2,9 L8,3 L14,9 M2,17 L8,23 L14,17" fill="none" stroke="#d0d0d0" stroke-width="2.4"/></svg><div style="position:absolute;left:4610px;top:1138px;width:510px;height:2px;background:#4a4a4a"></div><div class="ab" style="left:4626px;top:1154px;width:0;height:0;border-left:15px solid #8a8a8a;border-top:9px solid transparent;border-bottom:9px solid transparent"></div><div class="t" style="left:4653.0px;top:1148.9px;font-size:27.33px;line-height:27.33px;font-weight:bold;color:#7c7c7c;transform:scaleX(0.9815);transform-origin:0 0;">Movie</div><div style="position:absolute;left:4610px;top:1186px;width:510px;height:2px;background:#4a4a4a"></div><div class="ab" style="left:4626px;top:1201.5px;width:0;height:0;border-left:15px solid #8a8a8a;border-top:9px solid transparent;border-bottom:9px solid transparent"></div><div class="t" style="left:4653.0px;top:1196.4px;font-size:27.33px;line-height:27.33px;font-weight:bold;color:#7c7c7c;transform:scaleX(1.0059);transform-origin:0 0;">Title</div><div style="position:absolute;left:4610px;top:1234px;width:510px;height:2px;background:#4a4a4a"></div><div class="ab" style="left:4626px;top:1249px;width:0;height:0;border-left:15px solid #8a8a8a;border-top:9px solid transparent;border-bottom:9px solid transparent"></div><div class="t" style="left:4653.0px;top:1243.9px;font-size:27.33px;line-height:27.33px;font-weight:bold;color:#7c7c7c;transform:scaleX(0.9432);transform-origin:0 0;">Audio</div><div class="t" style="left:2135.5px;top:2344.3px;font-size:23.26px;line-height:23.26px;font-weight:normal;color:#ffffff;transform:scaleX(1.0240);transform-origin:0 0;">Zoom: 308%</div><div class="t" style="left:2334.5px;top:2344.3px;font-size:23.26px;line-height:23.26px;font-weight:normal;color:#ffffff;transform:scaleX(1.0166);transform-origin:0 0;">Rotation: 0.0°</div><div class="ab" style="left:2102px;top:2404.0px;width:191.5px;height:18px;border-radius:50%;background:radial-gradient(ellipse at center, rgba(0,0,0,0.35), rgba(0,0,0,0) 70%)"></div><div class="ab" style="left:2102px;top:2379.4px;width:191.5px;height:24.59999999999991px;border-radius:4px;background:linear-gradient(90deg,#151515 0%,#2a2a2a 8%,#5a5a5a 22%,#8a8a8a 45%,#909090 55%,#6a6a6a 78%,#2a2a2a 92%,#151515 100%);box-shadow:0 0 0 1px #1a1a1a"></div><div style="position:absolute;left:2114px;top:2381.4px;width:2px;height:20.59999999999991px;background:rgba(20,20,20,0.55)"></div><div style="position:absolute;left:2130px;top:2381.4px;width:2px;height:20.59999999999991px;background:rgba(20,20,20,0.55)"></div><div style="position:absolute;left:2150px;top:2381.4px;width:2px;height:20.59999999999991px;background:rgba(20,20,20,0.55)"></div><div style="position:absolute;left:2176px;top:2381.4px;width:2px;height:20.59999999999991px;background:rgba(20,20,20,0.55)"></div><div style="position:absolute;left:2202px;top:2381.4px;width:2px;height:20.59999999999991px;background:rgba(20,20,20,0.55)"></div><div style="position:absolute;left:2228px;top:2381.4px;width:2px;height:20.59999999999991px;background:rgba(20,20,20,0.55)"></div><div style="position:absolute;left:2254px;top:2381.4px;width:2px;height:20.59999999999991px;background:rgba(20,20,20,0.55)"></div><div style="position:absolute;left:2274px;top:2381.4px;width:2px;height:20.59999999999991px;background:rgba(20,20,20,0.55)"></div><div style="position:absolute;left:2102px;top:2379.4px;width:191.5px;height:3px;background:rgba(0,0,0,0.4)"></div><div style="position:absolute;left:2102px;top:2401px;width:191.5px;height:3px;background:rgba(0,0,0,0.4)"></div><div class="ab" style="left:2314px;top:2404.0px;width:191.30000000000018px;height:18px;border-radius:50%;background:radial-gradient(ellipse at center, rgba(0,0,0,0.35), rgba(0,0,0,0) 70%)"></div><div class="ab" style="left:2314px;top:2379.4px;width:191.30000000000018px;height:24.59999999999991px;border-radius:4px;background:linear-gradient(90deg,#151515 0%,#2a2a2a 8%,#5a5a5a 22%,#8a8a8a 45%,#909090 55%,#6a6a6a 78%,#2a2a2a 92%,#151515 100%);box-shadow:0 0 0 1px #1a1a1a"></div><div style="position:absolute;left:2338px;top:2381.4px;width:2px;height:20.59999999999991px;background:rgba(20,20,20,0.55)"></div><div style="position:absolute;left:2359px;top:2381.4px;width:2px;height:20.59999999999991px;background:rgba(20,20,20,0.55)"></div><div style="position:absolute;left:2382px;top:2381.4px;width:2px;height:20.59999999999991px;background:rgba(20,20,20,0.55)"></div><div style="position:absolute;left:2409px;top:2381.4px;width:2px;height:20.59999999999991px;background:rgba(20,20,20,0.55)"></div><div style="position:absolute;left:2436px;top:2381.4px;width:2px;height:20.59999999999991px;background:rgba(20,20,20,0.55)"></div><div style="position:absolute;left:2461px;top:2381.4px;width:2px;height:20.59999999999991px;background:rgba(20,20,20,0.55)"></div><div style="position:absolute;left:2484px;top:2381.4px;width:2px;height:20.59999999999991px;background:rgba(20,20,20,0.55)"></div><div style="position:absolute;left:2314px;top:2379.4px;width:191.30000000000018px;height:3px;background:rgba(0,0,0,0.4)"></div><div style="position:absolute;left:2314px;top:2401px;width:191.30000000000018px;height:3px;background:rgba(0,0,0,0.4)"></div><div style="position:absolute;left:2408.5px;top:2381.4px;width:3px;height:20.59999999999991px;background:#111"></div><div style="position:absolute;left:0px;top:2429px;width:5120px;height:3px;background:#0c0c0c"></div><div style="position:absolute;left:0px;top:2432px;width:5120px;height:2px;background:#4d4d4d"></div><div style="position:absolute;left:0px;top:2434px;width:5120px;height:98px;background:linear-gradient(#262626,#1a1a1a)"></div><div style="position:absolute;left:0px;top:2532px;width:5120px;height:3px;background:#0a0a0a"></div><div class="ab" style="left:152px;top:2432px;width:116px;height:100px;background:linear-gradient(#585858,#333333);box-shadow:inset 1.5px 0 0 #777, inset -1.5px 0 0 #777, inset 0 2px 0 #888"></div><div class="ab" style="left:4984.5px;top:2432px;width:106.5px;height:100px;background:linear-gradient(#585858,#333333);box-shadow:inset 1.5px 0 0 #777, inset -1.5px 0 0 #777, inset 0 2px 0 #888"></div><div class="t" style="left:34.6px;top:2500.9px;font-size:22.09px;line-height:22.09px;font-weight:normal;color:#d4d4d4;transform:scaleX(0.9800);transform-origin:0 0;">Storyboard</div><div class="t" style="left:169.8px;top:2500.9px;font-size:22.09px;line-height:22.09px;font-weight:normal;color:#d4d4d4;transform:scaleX(0.9702);transform-origin:0 0;">Timeline</div><div class="t" style="left:311.3px;top:2500.9px;font-size:22.09px;line-height:22.09px;font-weight:normal;color:#d4d4d4;transform:scaleX(0.9473);transform-origin:0 0;">Blank Slide</div><div class="t" style="left:441.0px;top:2500.9px;font-size:22.09px;line-height:22.09px;font-weight:normal;color:#d4d4d4;transform:scaleX(0.9888);transform-origin:0 0;">Add Title</div><div style="position:absolute;left:50px;top:2453.5px;width:34px;height:34.5px;border:4.5px solid #8a8a8a;border-bottom-width:6px;border-radius:4px"></div><div style="position:absolute;left:92px;top:2453.5px;width:34px;height:34.5px;border:4.5px solid #8a8a8a;border-bottom-width:6px;border-radius:4px"></div><div style="position:absolute;left:178px;top:2459px;width:64px;height:8px;background:#4a8ae8"></div><div style="position:absolute;left:178px;top:2475.5px;width:64px;height:8.5px;background:#4a8ae8"></div><div style="position:absolute;left:342px;top:2448.5px;width:44px;height:43.5px;border:4.5px dashed #8a8a8a;border-radius:7px"></div><div class="t" style="left:460.0px;top:2438.6px;font-size:62.50px;line-height:62.50px;font-weight:normal;color:#8a8a8a;transform:scaleX(1.2312);transform-origin:0 0;font-family:'Liberation Serif',serif;">T</div><div class="t" style="left:4556.0px;top:2500.9px;font-size:22.09px;line-height:22.09px;font-weight:normal;color:#d4d4d4;transform:scaleX(0.9631);transform-origin:0 0;">Snippets</div><div class="t" style="left:4673.0px;top:2500.9px;font-size:22.09px;line-height:22.09px;font-weight:normal;color:#d4d4d4;transform:scaleX(0.9524);transform-origin:0 0;">Images</div><div class="t" style="left:4784.7px;top:2500.9px;font-size:22.09px;line-height:22.09px;font-weight:normal;color:#d4d4d4;transform:scaleX(0.9474);transform-origin:0 0;">Movies</div><div class="t" style="left:4900.0px;top:2500.9px;font-size:22.09px;line-height:22.09px;font-weight:normal;color:#d4d4d4;transform:scaleX(0.9734);transform-origin:0 0;">Audio</div><div class="t" style="left:5000.0px;top:2500.9px;font-size:22.09px;line-height:22.09px;font-weight:normal;color:#d4d4d4;transform:scaleX(0.9785);transform-origin:0 0;">Options</div><div style="position:absolute;left:4573.5px;top:2447.8px;width:48.5px;height:44px;border:5px solid #8a8a8a;border-bottom-width:10px;border-radius:7px"></div><svg class="ab" style="left:4682px;top:2450.6px;width:52px;height:39px" viewBox="0 0 52 39"><rect x="2" y="2" width="48" height="35" fill="none" stroke="#8a8a8a" stroke-width="4"/><circle cx="20" cy="14" r="5" fill="#8a8a8a"/><polygon points="4,34 18,20 26,27 36,14 48,26 48,35 4,35" fill="#8a8a8a"/></svg><svg class="ab" style="left:4795px;top:2447px;width:46px;height:46px" viewBox="0 0 46 46"><rect x="2" y="2" width="42" height="42" fill="none" stroke="#8a8a8a" stroke-width="4"/><line x1="12" y1="2" x2="12" y2="44" stroke="#8a8a8a" stroke-width="3"/><line x1="34" y1="2" x2="34" y2="44" stroke="#8a8a8a" stroke-width="3"/><line x1="12" y1="23" x2="34" y2="23" stroke="#8a8a8a" stroke-width="3"/><line x1="2" y1="9" x2="12" y2="9" stroke="#8a8a8a" stroke-width="2.5"/><line x1="34" y1="9" x2="44" y2="9" stroke="#8a8a8a" stroke-width="2.5"/><line x1="2" y1="16" x2="12" y2="16" stroke="#8a8a8a" stroke-width="2.5"/><line x1="34" y1="16" x2="44" y2="16" stroke="#8a8a8a" stroke-width="2.5"/><line x1="2" y1="23" x2="12" y2="23" stroke="#8a8a8a" stroke-width="2.5"/><line x1="34" y1="23" x2="44" y2="23" stroke="#8a8a8a" stroke-width="2.5"/><line x1="2" y1="30" x2="12" y2="30" stroke="#8a8a8a" stroke-width="2.5"/><line x1="34" y1="30" x2="44" y2="30" stroke="#8a8a8a" stroke-width="2.5"/><line x1="2" y1="37" x2="12" y2="37" stroke="#8a8a8a" stroke-width="2.5"/><line x1="34" y1="37" x2="44" y2="37" stroke="#8a8a8a" stroke-width="2.5"/></svg><svg class="ab" style="left:4904px;top:2444px;width:47px;height:50px" viewBox="0 0 47 50"><path d="M14,40 V10 L44,3 V34" fill="none" stroke="#8a8a8a" stroke-width="5"/><ellipse cx="9" cy="40" rx="8.5" ry="7" fill="#8a8a8a"/><ellipse cx="38" cy="35" rx="8.5" ry="7" fill="#8a8a8a"/><path d="M14,10 L44,3 V12 L14,19 Z" fill="#8a8a8a"/></svg><svg class="ab" style="left:5013px;top:2446px;width:50px;height:48px" viewBox="0 0 50 48"><path d="M7,41 L26,22" stroke="#4a8ae8" stroke-width="9" stroke-linecap="round"/><path d="M42,18.5 A9.5,9.5 0 1 1 36.5,6.5" fill="none" stroke="#4a8ae8" stroke-width="8.5"/></svg><div class="ab" style="left:2162.3px;top:2456px;width:54px;height:54px;border-radius:50%;background:linear-gradient(#626262,#2e2e2e);box-shadow:0 0 0 2.5px #0a0a0a, 0 0 0 4px #505050"></div><svg class="ab" style="left:2162.3px;top:2456px;width:54px;height:54px" viewBox="-50 -50 100 100"><polygon points="-32,0 -4,-18 -4,18" fill="#cfcfcf"/><polygon points="-4,0 22,-18 22,18" fill="#cfcfcf"/></svg><div class="ab" style="left:2229.2px;top:2449.5px;width:67.0px;height:67.0px;border-radius:50%;background:linear-gradient(#626262,#2e2e2e);box-shadow:0 0 0 2.5px #0a0a0a, 0 0 0 4px #505050"></div><svg class="ab" style="left:2229.2px;top:2449.5px;width:67.0px;height:67.0px" viewBox="-50 -50 100 100"><polygon points="-19,-30 26,0 -19,30" fill="#cfcfcf"/></svg><div class="ab" style="left:2309.5px;top:2449.5px;width:67.0px;height:67.0px;border-radius:50%;background:linear-gradient(#626262,#2e2e2e);box-shadow:0 0 0 2.5px #0a0a0a, 0 0 0 4px #505050"></div><svg class="ab" style="left:2309.5px;top:2449.5px;width:67.0px;height:67.0px" viewBox="-50 -50 100 100"><path d="M-16,-14 H-24 Q-28,-14 -28,-10 V20 Q-28,24 -24,24 H14 Q18,24 18,20 V12" fill="none" stroke="#cfcfcf" stroke-width="7"/><path d="M-22,20 Q-18,-10 14,-10 V-24 L34,-4 L14,14 V2 Q-10,2 -22,20 Z" fill="#cfcfcf"/></svg><div class="ab" style="left:2390.3px;top:2456px;width:54px;height:54px;border-radius:50%;background:linear-gradient(#626262,#2e2e2e);box-shadow:0 0 0 2.5px #0a0a0a, 0 0 0 4px #505050"></div><svg class="ab" style="left:2390.3px;top:2456px;width:54px;height:54px" viewBox="-50 -50 100 100"><polygon points="-22,-18 4,0 -22,18" fill="#cfcfcf"/><polygon points="4,-18 32,0 4,18" fill="#cfcfcf"/></svg><div style="position:absolute;left:0px;top:2535px;width:5120px;height:293px;background:#4b4b4b"></div><div style="position:absolute;left:0px;top:2535px;width:5120px;height:1.5px;background:#3b5fa8"></div><div style="position:absolute;left:0px;top:2535px;width:2px;height:293px;background:#3b5fa8"></div><div style="position:absolute;left:0px;top:2827px;width:5120px;height:1.5px;background:#3b5fa8"></div><div style="position:absolute;left:2px;top:2536.5px;width:5118px;height:32px;background:#555555"></div><div style="position:absolute;left:2px;top:2568px;width:5118px;height:2px;background:#2f2f2f"></div><div style="position:absolute;left:25px;top:2560px;width:2px;height:8px;background:#2a2a2a"></div><div style="position:absolute;left:113px;top:2560px;width:2px;height:8px;background:#2a2a2a"></div><div style="position:absolute;left:201px;top:2560px;width:2px;height:8px;background:#2a2a2a"></div><div style="position:absolute;left:289px;top:2560px;width:2px;height:8px;background:#2a2a2a"></div><div style="position:absolute;left:377px;top:2560px;width:2px;height:8px;background:#2a2a2a"></div><div style="position:absolute;left:465px;top:2560px;width:2px;height:8px;background:#2a2a2a"></div><div style="position:absolute;left:553px;top:2560px;width:2px;height:8px;background:#2a2a2a"></div><div style="position:absolute;left:641px;top:2560px;width:2px;height:8px;background:#2a2a2a"></div><div style="position:absolute;left:729px;top:2560px;width:2px;height:8px;background:#2a2a2a"></div><div style="position:absolute;left:817px;top:2560px;width:2px;height:8px;background:#2a2a2a"></div><div style="position:absolute;left:905px;top:2560px;width:2px;height:8px;background:#2a2a2a"></div><div style="position:absolute;left:993px;top:2560px;width:2px;height:8px;background:#2a2a2a"></div><div style="position:absolute;left:1081px;top:2560px;width:2px;height:8px;background:#2a2a2a"></div><div style="position:absolute;left:1169px;top:2560px;width:2px;height:8px;background:#2a2a2a"></div><div style="position:absolute;left:1257px;top:2560px;width:2px;height:8px;background:#2a2a2a"></div><div style="position:absolute;left:1345px;top:2560px;width:2px;height:8px;background:#2a2a2a"></div><div style="position:absolute;left:1433px;top:2560px;width:2px;height:8px;background:#2a2a2a"></div><div style="position:absolute;left:1521px;top:2560px;width:2px;height:8px;background:#2a2a2a"></div><div style="position:absolute;left:1609px;top:2560px;width:2px;height:8px;background:#2a2a2a"></div><div style="position:absolute;left:1697px;top:2560px;width:2px;height:8px;background:#2a2a2a"></div><div style="position:absolute;left:1785px;top:2560px;width:2px;height:8px;background:#2a2a2a"></div><div style="position:absolute;left:1873px;top:2560px;width:2px;height:8px;background:#2a2a2a"></div><div style="position:absolute;left:1961px;top:2560px;width:2px;height:8px;background:#2a2a2a"></div><div style="position:absolute;left:2049px;top:2560px;width:2px;height:8px;background:#2a2a2a"></div><div style="position:absolute;left:2137px;top:2560px;width:2px;height:8px;background:#2a2a2a"></div><div style="position:absolute;left:2225px;top:2560px;width:2px;height:8px;background:#2a2a2a"></div><div style="position:absolute;left:2313px;top:2560px;width:2px;height:8px;background:#2a2a2a"></div><div style="position:absolute;left:2401px;top:2560px;width:2px;height:8px;background:#2a2a2a"></div><div style="position:absolute;left:2489px;top:2560px;width:2px;height:8px;background:#2a2a2a"></div><div style="position:absolute;left:2577px;top:2560px;width:2px;height:8px;background:#2a2a2a"></div><div style="position:absolute;left:2665px;top:2560px;width:2px;height:8px;background:#2a2a2a"></div><div style="position:absolute;left:2753px;top:2560px;width:2px;height:8px;background:#2a2a2a"></div><div style="position:absolute;left:2841px;top:2560px;width:2px;height:8px;background:#2a2a2a"></div><div style="position:absolute;left:2929px;top:2560px;width:2px;height:8px;background:#2a2a2a"></div><div style="position:absolute;left:3017px;top:2560px;width:2px;height:8px;background:#2a2a2a"></div><div style="position:absolute;left:3105px;top:2560px;width:2px;height:8px;background:#2a2a2a"></div><div style="position:absolute;left:3193px;top:2560px;width:2px;height:8px;background:#2a2a2a"></div><div style="position:absolute;left:3281px;top:2560px;width:2px;height:8px;background:#2a2a2a"></div><div style="position:absolute;left:3369px;top:2560px;width:2px;height:8px;background:#2a2a2a"></div><div style="position:absolute;left:3457px;top:2560px;width:2px;height:8px;background:#2a2a2a"></div><div style="position:absolute;left:3545px;top:2560px;width:2px;height:8px;background:#2a2a2a"></div><div style="position:absolute;left:3633px;top:2560px;width:2px;height:8px;background:#2a2a2a"></div><div style="position:absolute;left:3721px;top:2560px;width:2px;height:8px;background:#2a2a2a"></div><div style="position:absolute;left:3809px;top:2560px;width:2px;height:8px;background:#2a2a2a"></div><div style="position:absolute;left:3897px;top:2560px;width:2px;height:8px;background:#2a2a2a"></div><div style="position:absolute;left:3985px;top:2560px;width:2px;height:8px;background:#2a2a2a"></div><div style="position:absolute;left:4073px;top:2560px;width:2px;height:8px;background:#2a2a2a"></div><div style="position:absolute;left:4161px;top:2560px;width:2px;height:8px;background:#2a2a2a"></div><div style="position:absolute;left:4249px;top:2560px;width:2px;height:8px;background:#2a2a2a"></div><div style="position:absolute;left:4337px;top:2560px;width:2px;height:8px;background:#2a2a2a"></div><div style="position:absolute;left:4425px;top:2560px;width:2px;height:8px;background:#2a2a2a"></div><div style="position:absolute;left:4513px;top:2560px;width:2px;height:8px;background:#2a2a2a"></div><div style="position:absolute;left:4601px;top:2560px;width:2px;height:8px;background:#2a2a2a"></div><div style="position:absolute;left:4689px;top:2560px;width:2px;height:8px;background:#2a2a2a"></div><div style="position:absolute;left:4777px;top:2560px;width:2px;height:8px;background:#2a2a2a"></div><div style="position:absolute;left:4865px;top:2560px;width:2px;height:8px;background:#2a2a2a"></div><div style="position:absolute;left:4953px;top:2560px;width:2px;height:8px;background:#2a2a2a"></div><div style="position:absolute;left:5041px;top:2560px;width:2px;height:8px;background:#2a2a2a"></div><div style="position:absolute;left:5129px;top:2560px;width:2px;height:8px;background:#2a2a2a"></div><div class="t" style="left:34.6px;top:2541.4px;font-size:21.51px;line-height:21.51px;font-weight:normal;color:#9c9c9c;transform:scaleX(1.1008);transform-origin:0 0;">00:00.0</div><div class="t" style="left:1307.9px;top:2540.9px;font-size:22.09px;line-height:22.09px;font-weight:normal;color:#ffffff;transform:scaleX(0.9703);transform-origin:0 0;">15.3s</div><div class="t" style="left:1383.0px;top:2541.4px;font-size:21.51px;line-height:21.51px;font-weight:normal;color:#9c9c9c;transform:scaleX(1.0590);transform-origin:0 0;">00:15.3</div><div class="t" style="left:2443.9px;top:2540.9px;font-size:22.09px;line-height:22.09px;font-weight:normal;color:#ffffff;transform:scaleX(0.9703);transform-origin:0 0;">12.9s</div><div class="t" style="left:2519.0px;top:2541.4px;font-size:21.51px;line-height:21.51px;font-weight:normal;color:#9c9c9c;transform:scaleX(1.0590);transform-origin:0 0;">00:28.2</div><div class="t" style="left:4301.6px;top:2540.9px;font-size:22.09px;line-height:22.09px;font-weight:normal;color:#ffffff;transform:scaleX(0.9703);transform-origin:0 0;">21.1s</div><div class="t" style="left:4378.5px;top:2541.4px;font-size:21.51px;line-height:21.51px;font-weight:normal;color:#9c9c9c;transform:scaleX(1.0590);transform-origin:0 0;">00:49.4</div><div class="t" style="left:4831.3px;top:2540.9px;font-size:22.09px;line-height:22.09px;font-weight:normal;color:#ffffff;transform:scaleX(0.9703);transform-origin:0 0;">5.9s</div><div class="t" style="left:4894.6px;top:2541.4px;font-size:21.51px;line-height:21.51px;font-weight:normal;color:#9c9c9c;transform:scaleX(1.0590);transform-origin:0 0;">00:55.2</div><div style="position:absolute;left:24px;top:2536px;width:2px;height:292px;background:#2e2e2e"></div><div style="position:absolute;left:2508px;top:2536px;width:2px;height:292px;background:#333333"></div><div style="position:absolute;left:4368px;top:2536px;width:2px;height:292px;background:#333333"></div><div style="position:absolute;left:4884px;top:2536px;width:2px;height:292px;background:#333333"></div><div class="t" style="left:690.5px;top:2576.3px;font-size:23.26px;line-height:23.26px;font-weight:normal;color:#7c7c7c;">1</div><div class="t" style="left:1933.5px;top:2576.3px;font-size:23.26px;line-height:23.26px;font-weight:normal;color:#7c7c7c;">2</div><div class="t" style="left:3430.5px;top:2576.3px;font-size:23.26px;line-height:23.26px;font-weight:normal;color:#7c7c7c;">3</div><div class="t" style="left:4619.5px;top:2576.3px;font-size:23.26px;line-height:23.26px;font-weight:normal;color:#7c7c7c;">4</div><div style="position:absolute;left:1372px;top:2548px;width:2.5px;height:280px;background:#ffffff"></div><svg class="ab" style="left:1358.7px;top:2534px;width:29px;height:18px" viewBox="0 0 29 18"><defs><linearGradient id="phg" x1="0" y1="0" x2="0" y2="1"><stop offset="0" stop-color="#5aa0f5"/><stop offset="1" stop-color="#3a7ae0"/></linearGradient></defs><path d="M0,0 H29 V4 L14.5,18 L0,4 Z" fill="url(#phg)"/></svg><div style="position:absolute;left:25px;top:2610px;width:5095px;height:1px;background:#303030"></div><div style="position:absolute;left:25px;top:2611px;width:1436px;height:38px;background:#a2a2a2"></div><div style="position:absolute;left:25px;top:2649px;width:1348px;height:39px;background:#979797"></div><div style="position:absolute;left:1461px;top:2611px;width:1136px;height:38px;background:#90bde9"></div><div style="position:absolute;left:1373px;top:2649px;width:1136px;height:39px;background:#86b5e6"></div><div style="position:absolute;left:2597px;top:2611px;width:1772px;height:38px;background:#a2a2a2"></div><div style="position:absolute;left:2509px;top:2649px;width:1860px;height:39px;background:#979797"></div><div style="position:absolute;left:1373px;top:2648px;width:88px;height:2px;background:#3a3a3a"></div><div style="position:absolute;left:1460px;top:2611px;width:2px;height:38px;background:#3a3a3a"></div><div style="position:absolute;left:2509px;top:2648px;width:88px;height:2px;background:#3a3a3a"></div><div style="position:absolute;left:2596px;top:2611px;width:2px;height:38px;background:#3a3a3a"></div><div style="position:absolute;left:2508px;top:2649px;width:2px;height:39px;background:#3a3a3a"></div><div style="position:absolute;left:1372px;top:2649px;width:2px;height:39px;background:#3a3a3a"></div><div style="position:absolute;left:25px;top:2688px;width:4344px;height:1.5px;background:#303030"></div><div style="position:absolute;left:1372px;top:2611px;width:2.5px;height:38px;background:#ffffff"></div><svg class="ab" style="left:4369px;top:2610px;width:751px;height:80px" viewBox="4369 2610 751 80"><path d="M4371,2613 H5120 M4371,2687 H4885 V2648 H4970 V2613 M4885,2687 H5120 M4371,2613 V2687" fill="none" stroke="#707070" stroke-width="4" stroke-dasharray="12,12"/></svg><div style="position:absolute;left:4369px;top:2610px;width:2px;height:79px;background:#333"></div><div class="ab" style="left:644px;top:2614px;width:108px;height:72px;background:#1e1e1e;border:2px solid #111;overflow:hidden"><div class="ab" style="left:0;top:0;width:54px;height:70px;background:radial-gradient(ellipse 60% 70% at 50% 45%,#5a5a5a,#2a2a2a 60%,#111 100%)"></div><div class="ab" style="left:14px;top:37px;width:30px;height:7px;border-radius:50%;background:#666"></div><div class="ab" style="left:19px;top:22px;width:20px;height:18px;background:linear-gradient(90deg,#222,#444,#222);border-radius:2px"></div><div class="ab" style="left:13px;top:20px;width:32px;height:5px;background:#1a1a1a;border-radius:50%;box-shadow:0 1px 0 #d8a820"></div><div class="ab" style="left:17px;top:7px;width:11px;height:11px;background:#e0b020;transform:rotate(-15deg)"></div><div class="ab" style="left:23px;top:6px;width:14px;height:13px;background:#f2c030;border:2px solid #f4f4f4;transform:rotate(8deg)"></div><div class="ab" style="left:32px;top:26px;width:8px;height:10px;border-right:3px solid #3a80ea;border-top:3px solid #3a80ea"></div><div class="ab" style="left:29px;top:33px;width:6px;height:5px;border-radius:50%;background:#3a80ea"></div><div class="ab" style="left:9px;top:41px;width:37px;height:4px;background:#e6e6e6;border-radius:1px;opacity:0.85"></div><div class="ab" style="left:12px;top:49px;width:31px;height:1.5px;background:#777"></div><div class="ab" style="left:6px;top:61px;width:38px;height:3px;background:#555"></div><div class="ab" style="left:14px;top:66px;width:24px;height:3px;background:#666"></div><div class="ab" style="left:54px;top:0;width:54px;height:70px;background:#2e2e2e"></div><div class="ab" style="left:57px;top:3px;width:4px;height:5px;background:#ccc"></div><div class="ab" style="left:64px;top:4px;width:16px;height:2px;background:#888"></div><div class="ab" style="left:57px;top:11px;width:4px;height:5px;background:#ccc"></div><div class="ab" style="left:64px;top:12px;width:22px;height:2px;background:#888"></div></div><div class="ab" style="left:1930px;top:2614px;width:110px;height:72px;background:#1e1e1e;border:2px solid #111;overflow:hidden"><div class="ab" style="left:0;top:0;width:110px;height:52px;background:#474747"></div><div class="ab" style="left:0;top:52px;width:110px;height:18px;background:#000"></div><div class="ab" style="left:0;top:0;width:110px;height:4px;background:#222"></div><div class="ab" style="left:33px;top:4px;width:48px;height:66px;background:#363636"></div><div class="ab" style="left:33px;top:20px;width:48px;height:4px;background:#2358d6"></div><div class="ab" style="left:81px;top:20px;width:26px;height:23px;background:#363636"></div><div class="ab" style="left:37px;top:7px;width:12px;height:1.5px;background:#aaa"></div><div class="ab" style="left:37px;top:13px;width:24px;height:1.5px;background:#aaa"></div><div class="ab" style="left:37px;top:27px;width:10px;height:1.5px;background:#aaa"></div><div class="ab" style="left:37px;top:30px;width:10px;height:1.5px;background:#aaa"></div><div class="ab" style="left:37px;top:33px;width:10px;height:1.5px;background:#aaa"></div><div class="ab" style="left:37px;top:38px;width:10px;height:1.5px;background:#aaa"></div><div class="ab" style="left:37px;top:42px;width:10px;height:1.5px;background:#aaa"></div><div class="ab" style="left:37px;top:46px;width:10px;height:1.5px;background:#aaa"></div><div class="ab" style="left:37px;top:50px;width:12px;height:1.5px;background:#aaa"></div><div class="ab" style="left:37px;top:56px;width:10px;height:1.5px;background:#aaa"></div></div><div class="ab" style="left:3420px;top:2614px;width:128px;height:72px;background:#1e1e1e;border:2px solid #111;overflow:hidden"><div class="ab" style="left:0;top:0;width:126px;height:70px;background:#2c2c2c"></div><div class="ab" style="left:2px;top:2px;width:122px;height:10px;background:#3a3a3a"></div><div class="ab" style="left:30px;top:12px;width:94px;height:50px;background:#1c1c1c"></div><div class="ab" style="left:63px;top:12px;width:1px;height:50px;background:#333"></div><div class="ab" style="left:0;top:62px;width:126px;height:8px;background:#2e2e2e"></div><div class="ab" style="left:4px;top:14px;width:16px;height:1.5px;background:#888"></div><div class="ab" style="left:4px;top:18px;width:16px;height:1.5px;background:#888"></div><div class="ab" style="left:4px;top:23px;width:16px;height:1.5px;background:#888"></div><div class="ab" style="left:4px;top:27px;width:16px;height:1.5px;background:#888"></div><div class="ab" style="left:4px;top:33px;width:16px;height:1.5px;background:#888"></div><div class="ab" style="left:4px;top:37px;width:16px;height:1.5px;background:#888"></div><div class="ab" style="left:4px;top:41px;width:16px;height:1.5px;background:#888"></div><div class="ab" style="left:4px;top:48px;width:16px;height:1.5px;background:#888"></div><div class="ab" style="left:4px;top:52px;width:16px;height:1.5px;background:#888"></div><div class="ab" style="left:4px;top:58px;width:16px;height:1.5px;background:#888"></div></div><svg class="ab" style="left:1404px;top:2636px;width:26px;height:26px" viewBox="0 0 26 26"><rect x="1" y="1" width="24" height="24" fill="#e8b840" stroke="#c08d28" stroke-width="2"/><polygon points="3,3 23,3 13,13" fill="#fbe98a"/><polygon points="3,23 23,23 13,13" fill="#fbe98a"/></svg><svg class="ab" style="left:4357px;top:2636px;width:26px;height:26px" viewBox="0 0 26 26"><rect x="1" y="1" width="24" height="24" fill="#cccccc" stroke="#999999" stroke-width="2"/><polygon points="3,3 23,3 13,13" fill="#ffffff"/><polygon points="3,23 23,23 13,13" fill="#ffffff"/></svg><svg class="ab" style="left:4916px;top:2636px;width:26px;height:26px" viewBox="0 0 26 26"><rect x="1" y="1" width="24" height="24" fill="#cccccc" stroke="#999999" stroke-width="2"/><polygon points="3,3 23,3 13,13" fill="#ffffff"/><polygon points="3,23 23,23 13,13" fill="#ffffff"/></svg><div class="ab" style="left:2540px;top:2649px;width:25px;height:13px;background:#cfcfcf;border:1.5px solid #888;border-top:none"></div><div class="ab" style="left:2543px;top:2650px;width:0;height:0;border-bottom:10px solid #fff;border-left:9.5px solid transparent;border-right:9.5px solid transparent"></div><div style="position:absolute;left:25px;top:2706px;width:5095px;height:1px;background:#303030"></div><div style="position:absolute;left:25px;top:2707px;width:5095px;height:39px;background:#a2a2a2"></div><div style="position:absolute;left:25px;top:2746px;width:5095px;height:38px;background:#979797"></div><div style="position:absolute;left:25px;top:2784px;width:5095px;height:1.5px;background:#303030"></div><svg class="ab" style="left:0;top:2700px;width:5120px;height:90px" viewBox="0 2700 5120 90"><path d="M44,2784 L44,2778.1 L46,2778.1 L48,2778.9 L50,2778.2 L52,2778.9 L54,2779.6 L56,2778.8 L58,2779.7 L60,2779.6 L62,2779.6 L64,2779.4 L66,2778.6 L68,2776.5 L70,2776.3 L72,2777.3 L74,2777.2 L76,2775.0 L78,2776.4 L80,2775.3 L82,2775.0 L84,2776.7 L86,2776.2 L88,2777.7 L90,2778.2 L92,2778.6 L94,2778.1 L96,2778.7 L98,2777.4 L100,2778.0 L102,2777.5 L104,2778.2 L106,2778.3 L108,2778.4 L110,2778.2 L112,2776.3 L114,2775.3 L116,2773.7 L118,2774.8 L120,2775.6 L122,2775.5 L124,2776.6 L126,2776.1 L128,2775.9 L130,2775.4 L132,2774.7 L134,2775.2 L136,2777.0 L138,2777.7 L140,2777.6 L142,2775.4 L144,2774.7 L146,2776.7 L148,2773.5 L150,2774.7 L152,2774.9 L154,2774.7 L156,2773.8 L158,2772.8 L160,2772.2 L162,2772.1 L164,2772.1 L166,2772.0 L168,2771.9 L170,2771.9 L172,2771.8 L174,2771.7 L176,2772.4 L178,2772.4 L180,2774.0 L182,2773.4 L184,2771.7 L186,2771.3 L188,2772.4 L190,2771.2 L192,2771.2 L194,2771.2 L196,2771.0 L198,2772.4 L200,2773.8 L202,2773.9 L204,2772.0 L206,2773.5 L208,2772.7 L210,2772.2 L212,2772.8 L214,2774.0 L216,2773.1 L218,2772.0 L220,2771.8 L222,2773.5 L224,2772.7 L226,2772.9 L228,2772.1 L230,2770.7 L232,2769.8 L234,2770.0 L236,2770.9 L238,2769.6 L240,2770.0 L242,2769.5 L244,2770.3 L246,2769.4 L248,2769.7 L250,2771.3 L252,2770.9 L254,2772.6 L256,2771.7 L258,2770.9 L260,2770.6 L262,2769.5 L264,2768.8 L266,2769.2 L268,2768.9 L270,2769.2 L272,2768.5 L274,2768.5 L276,2768.4 L278,2768.3 L280,2768.3 L282,2768.2 L284,2768.1 L286,2768.1 L288,2768.9 L290,2745.8 L292,2725.8 L294,2722.6 L296,2722.1 L298,2727.5 L300,2730.4 L302,2728.6 L304,2734.5 L306,2735.1 L308,2735.1 L310,2731.0 L312,2724.7 L314,2729.7 L316,2724.8 L318,2720.6 L320,2720.7 L322,2721.0 L324,2721.2 L326,2724.2 L328,2734.4 L330,2725.5 L332,2726.4 L334,2726.8 L336,2735.8 L338,2734.4 L340,2740.0 L342,2729.8 L344,2735.6 L346,2733.1 L348,2733.7 L350,2740.0 L352,2743.9 L354,2744.8 L356,2744.3 L358,2737.4 L360,2735.7 L362,2733.9 L364,2736.6 L366,2732.7 L368,2728.0 L370,2727.4 L372,2727.6 L374,2731.2 L376,2729.9 L378,2728.4 L380,2728.7 L382,2729.0 L384,2729.2 L386,2734.9 L388,2738.8 L390,2742.4 L392,2743.1 L394,2741.2 L396,2735.9 L398,2740.9 L400,2744.2 L402,2744.8 L404,2743.8 L406,2743.3 L408,2744.2 L410,2743.1 L412,2745.1 L414,2745.9 L416,2745.9 L418,2746.0 L420,2746.0 L422,2745.9 L424,2745.3 L426,2743.9 L428,2743.6 L430,2743.8 L432,2743.3 L434,2740.3 L436,2738.9 L438,2736.7 L440,2735.2 L442,2730.4 L444,2733.7 L446,2732.9 L448,2731.4 L450,2728.0 L452,2733.6 L454,2734.0 L456,2734.9 L458,2732.0 L460,2733.8 L462,2734.9 L464,2741.7 L466,2737.4 L468,2738.7 L470,2738.7 L472,2740.2 L474,2733.6 L476,2737.9 L478,2743.1 L480,2739.9 L482,2744.2 L484,2744.2 L486,2744.2 L488,2743.5 L490,2744.3 L492,2736.8 L494,2736.7 L496,2739.9 L498,2734.3 L500,2736.5 L502,2738.5 L504,2732.6 L506,2732.9 L508,2722.8 L510,2727.8 L512,2722.7 L514,2729.7 L516,2738.5 L518,2732.7 L520,2736.5 L522,2741.0 L524,2737.8 L526,2737.8 L528,2737.7 L530,2732.4 L532,2727.6 L534,2723.0 L536,2722.0 L538,2721.9 L540,2723.0 L542,2721.8 L544,2725.0 L546,2721.7 L548,2727.7 L550,2735.6 L552,2731.4 L554,2739.7 L556,2741.6 L558,2745.3 L560,2745.4 L562,2743.2 L564,2744.3 L566,2745.5 L568,2745.3 L570,2734.2 L572,2733.8 L574,2724.9 L576,2735.1 L578,2728.9 L580,2737.4 L582,2738.8 L584,2733.6 L586,2735.4 L588,2742.1 L590,2737.2 L592,2734.2 L594,2731.6 L596,2726.7 L598,2727.2 L600,2724.4 L602,2726.9 L604,2731.6 L606,2734.9 L608,2735.8 L610,2737.5 L612,2720.7 L614,2731.9 L616,2722.2 L618,2721.5 L620,2722.9 L622,2724.9 L624,2727.1 L626,2732.6 L628,2724.5 L630,2727.8 L632,2738.0 L634,2734.5 L636,2726.7 L638,2734.4 L640,2737.4 L642,2736.8 L644,2728.9 L646,2723.7 L648,2734.2 L650,2727.9 L652,2739.3 L654,2737.1 L656,2734.0 L658,2733.4 L660,2724.6 L662,2727.7 L664,2718.2 L666,2718.1 L668,2718.0 L670,2723.4 L672,2725.8 L674,2730.3 L676,2735.5 L678,2733.9 L680,2723.1 L682,2725.7 L684,2728.9 L686,2726.9 L688,2730.0 L690,2734.0 L692,2732.2 L694,2728.0 L696,2724.9 L698,2727.8 L700,2727.9 L702,2732.1 L704,2731.2 L706,2735.3 L708,2736.1 L710,2730.0 L712,2728.3 L714,2723.1 L716,2721.4 L718,2724.1 L720,2732.2 L722,2721.6 L724,2719.2 L726,2732.6 L728,2732.2 L730,2727.2 L732,2732.6 L734,2739.2 L736,2732.8 L738,2728.5 L740,2725.2 L742,2722.9 L744,2717.0 L746,2724.1 L748,2715.6 L750,2719.9 L752,2730.5 L754,2729.0 L756,2733.1 L758,2721.0 L760,2716.9 L762,2724.9 L764,2732.9 L766,2727.3 L768,2723.5 L770,2714.9 L772,2714.8 L774,2726.6 L776,2724.3 L778,2730.1 L780,2732.4 L782,2732.1 L784,2720.6 L786,2721.9 L788,2724.1 L790,2735.3 L792,2738.6 L794,2741.5 L796,2745.5 L798,2731.0 L800,2731.6 L802,2723.3 L804,2724.0 L806,2721.7 L808,2723.3 L810,2724.1 L812,2724.1 L814,2732.7 L816,2726.7 L818,2731.4 L820,2735.2 L822,2731.3 L824,2731.3 L826,2740.4 L828,2743.1 L830,2736.5 L832,2734.7 L834,2741.2 L836,2739.4 L838,2740.7 L840,2746.7 L842,2741.7 L844,2748.5 L846,2749.8 L848,2748.4 L850,2753.3 L852,2754.0 L854,2754.0 L856,2754.0 L858,2749.1 L860,2752.9 L862,2754.0 L864,2754.0 L866,2752.9 L868,2749.9 L870,2743.4 L872,2737.6 L874,2733.7 L876,2740.0 L878,2740.8 L880,2745.0 L882,2743.0 L884,2738.9 L886,2745.3 L888,2750.5 L890,2752.7 L892,2747.9 L894,2750.1 L896,2743.8 L898,2752.4 L900,2754.0 L902,2749.3 L904,2751.1 L906,2754.0 L908,2754.0 L910,2754.0 L912,2751.1 L914,2754.0 L916,2754.0 L918,2754.0 L920,2752.9 L922,2754.0 L924,2744.6 L926,2737.5 L928,2732.5 L930,2738.3 L932,2740.9 L934,2743.8 L936,2748.5 L938,2748.5 L940,2752.9 L942,2752.7 L944,2745.6 L946,2753.5 L948,2754.0 L950,2754.0 L952,2747.5 L954,2754.0 L956,2754.0 L958,2753.6 L960,2753.9 L962,2746.0 L964,2747.4 L966,2737.9 L968,2733.3 L970,2734.8 L972,2727.7 L974,2733.3 L976,2743.8 L978,2748.2 L980,2745.0 L982,2735.2 L984,2737.8 L986,2733.8 L988,2724.8 L990,2725.8 L992,2732.4 L994,2734.1 L996,2739.7 L998,2748.7 L1000,2752.8 L1002,2749.5 L1004,2752.8 L1006,2753.7 L1008,2751.7 L1010,2753.0 L1012,2752.5 L1014,2743.1 L1016,2737.4 L1018,2733.4 L1020,2731.4 L1022,2741.5 L1024,2732.3 L1026,2733.2 L1028,2721.4 L1030,2722.3 L1032,2727.7 L1034,2727.4 L1036,2737.0 L1038,2739.0 L1040,2744.2 L1042,2733.9 L1044,2730.3 L1046,2741.4 L1048,2731.5 L1050,2729.4 L1052,2739.6 L1054,2744.3 L1056,2745.8 L1058,2750.2 L1060,2750.7 L1062,2744.3 L1064,2742.4 L1066,2745.2 L1068,2737.4 L1070,2723.8 L1072,2725.1 L1074,2737.7 L1076,2747.8 L1078,2739.1 L1080,2749.6 L1082,2749.4 L1084,2743.7 L1086,2732.4 L1088,2723.9 L1090,2725.7 L1092,2720.2 L1094,2728.6 L1096,2722.7 L1098,2722.2 L1100,2715.2 L1102,2720.1 L1104,2716.3 L1106,2729.5 L1108,2720.9 L1110,2733.0 L1112,2728.5 L1114,2721.8 L1116,2729.8 L1118,2721.8 L1120,2720.6 L1122,2714.8 L1124,2726.8 L1126,2735.2 L1128,2733.2 L1130,2720.9 L1132,2722.8 L1134,2715.5 L1136,2715.5 L1138,2724.3 L1140,2728.4 L1142,2728.9 L1144,2721.0 L1146,2714.0 L1148,2714.0 L1150,2714.0 L1152,2714.0 L1154,2714.0 L1156,2714.0 L1158,2718.1 L1160,2725.4 L1162,2724.4 L1164,2731.3 L1166,2729.2 L1168,2734.9 L1170,2728.6 L1172,2724.9 L1174,2738.2 L1176,2725.0 L1178,2734.6 L1180,2728.6 L1182,2720.0 L1184,2714.0 L1186,2714.0 L1188,2720.3 L1190,2726.7 L1192,2737.5 L1194,2738.9 L1196,2725.2 L1198,2730.1 L1200,2726.4 L1202,2731.9 L1204,2731.0 L1206,2732.4 L1208,2734.8 L1210,2734.2 L1212,2736.4 L1214,2734.5 L1216,2728.7 L1218,2740.9 L1220,2738.0 L1222,2732.1 L1224,2737.3 L1226,2742.4 L1228,2730.2 L1230,2732.4 L1232,2742.4 L1234,2733.5 L1236,2714.0 L1238,2720.7 L1240,2725.1 L1242,2720.6 L1244,2714.0 L1246,2714.0 L1248,2725.9 L1250,2725.1 L1252,2733.6 L1254,2733.7 L1256,2740.6 L1258,2735.1 L1260,2726.9 L1262,2732.0 L1264,2714.0 L1266,2724.2 L1268,2733.2 L1270,2735.8 L1272,2746.1 L1274,2745.6 L1276,2748.0 L1278,2745.0 L1280,2736.3 L1282,2739.8 L1284,2740.3 L1286,2716.4 L1288,2735.5 L1290,2732.5 L1292,2745.7 L1294,2730.1 L1296,2741.6 L1298,2747.7 L1300,2748.0 L1302,2732.5 L1304,2730.4 L1306,2735.0 L1308,2739.1 L1310,2741.9 L1312,2748.8 L1314,2745.4 L1316,2749.0 L1318,2749.0 L1320,2730.4 L1322,2727.5 L1324,2734.0 L1326,2733.4 L1328,2730.3 L1330,2730.8 L1332,2744.4 L1334,2745.0 L1336,2734.8 L1338,2732.5 L1340,2724.6 L1342,2715.6 L1344,2727.6 L1346,2725.6 L1348,2726.8 L1350,2714.0 L1352,2717.0 L1354,2714.0 L1356,2714.0 L1358,2714.0 L1360,2726.3 L1362,2739.5 L1364,2732.9 L1366,2742.6 L1368,2735.9 L1370,2737.5 L1372,2743.4 L1374,2749.0 L1376,2743.3 L1378,2738.4 L1380,2745.3 L1382,2743.3 L1384,2749.0 L1386,2746.4 L1388,2735.9 L1390,2732.0 L1392,2729.6 L1394,2723.8 L1396,2733.6 L1398,2729.1 L1400,2725.3 L1402,2728.6 L1404,2726.1 L1406,2721.1 L1408,2719.8 L1410,2726.9 L1412,2723.6 L1414,2733.2 L1416,2731.8 L1418,2726.0 L1420,2723.5 L1422,2720.8 L1424,2718.2 L1426,2731.2 L1428,2737.5 L1430,2737.5 L1432,2740.9 L1434,2744.8 L1436,2740.0 L1438,2736.9 L1440,2731.3 L1442,2721.5 L1444,2729.6 L1446,2721.3 L1448,2723.2 L1450,2716.4 L1452,2717.2 L1454,2727.7 L1456,2717.3 L1458,2728.7 L1460,2740.1 L1462,2732.0 L1464,2734.8 L1466,2741.2 L1468,2741.2 L1470,2740.8 L1472,2738.7 L1474,2738.1 L1476,2738.8 L1478,2723.1 L1480,2713.6 L1482,2718.2 L1484,2717.9 L1486,2730.9 L1488,2745.1 L1490,2734.0 L1492,2723.0 L1494,2720.7 L1496,2737.8 L1498,2722.3 L1500,2716.8 L1502,2724.4 L1504,2725.5 L1506,2728.7 L1508,2738.4 L1510,2734.7 L1512,2739.4 L1514,2739.3 L1516,2746.9 L1518,2746.0 L1520,2736.2 L1522,2730.6 L1524,2729.2 L1526,2731.2 L1528,2737.5 L1530,2730.4 L1532,2734.5 L1534,2727.5 L1536,2739.7 L1538,2745.9 L1540,2748.7 L1542,2737.2 L1544,2743.8 L1546,2749.0 L1548,2736.9 L1550,2738.1 L1552,2739.4 L1554,2747.4 L1556,2749.0 L1558,2746.2 L1560,2736.7 L1562,2747.6 L1564,2747.0 L1566,2746.5 L1568,2742.8 L1570,2728.7 L1572,2720.5 L1574,2713.3 L1576,2713.3 L1578,2722.2 L1580,2733.4 L1582,2724.4 L1584,2715.3 L1586,2735.2 L1588,2731.0 L1590,2728.2 L1592,2717.9 L1594,2719.3 L1596,2713.2 L1598,2713.2 L1600,2713.2 L1602,2718.5 L1604,2722.0 L1606,2731.4 L1608,2733.8 L1610,2722.5 L1612,2736.1 L1614,2732.5 L1616,2742.5 L1618,2734.1 L1620,2738.6 L1622,2741.3 L1624,2743.4 L1626,2743.7 L1628,2742.5 L1630,2732.3 L1632,2741.5 L1634,2728.6 L1636,2723.3 L1638,2716.1 L1640,2713.4 L1642,2713.0 L1644,2714.4 L1646,2713.0 L1648,2720.0 L1650,2713.0 L1652,2720.2 L1654,2713.0 L1656,2713.0 L1658,2713.0 L1660,2713.0 L1662,2713.0 L1664,2730.5 L1666,2735.8 L1668,2730.0 L1670,2737.9 L1672,2728.5 L1674,2716.4 L1676,2712.9 L1678,2712.9 L1680,2712.9 L1682,2712.9 L1684,2712.9 L1686,2712.9 L1688,2726.1 L1690,2722.1 L1692,2726.7 L1694,2725.0 L1696,2727.5 L1698,2726.7 L1700,2719.8 L1702,2712.8 L1704,2712.8 L1706,2712.8 L1708,2712.8 L1710,2712.8 L1712,2716.5 L1714,2712.8 L1716,2721.8 L1718,2727.1 L1720,2723.5 L1722,2719.9 L1724,2732.2 L1726,2731.1 L1728,2749.0 L1730,2749.0 L1732,2749.0 L1734,2739.3 L1736,2741.8 L1738,2743.2 L1740,2745.2 L1742,2745.4 L1744,2745.2 L1746,2745.7 L1748,2743.7 L1750,2743.0 L1752,2726.6 L1754,2721.9 L1756,2715.7 L1758,2715.9 L1760,2724.2 L1762,2715.3 L1764,2730.7 L1766,2735.8 L1768,2734.4 L1770,2727.5 L1772,2717.5 L1774,2716.7 L1776,2713.3 L1778,2712.5 L1780,2712.5 L1782,2712.5 L1784,2721.1 L1786,2725.3 L1788,2714.8 L1790,2712.5 L1792,2712.5 L1794,2712.5 L1796,2712.5 L1798,2717.5 L1800,2713.2 L1802,2712.4 L1804,2723.9 L1806,2727.8 L1808,2737.7 L1810,2744.7 L1812,2748.7 L1814,2749.0 L1816,2749.0 L1818,2749.0 L1820,2749.0 L1822,2741.6 L1824,2729.5 L1826,2728.6 L1828,2732.4 L1830,2720.5 L1832,2732.1 L1834,2736.4 L1836,2743.9 L1838,2739.2 L1840,2745.4 L1842,2743.6 L1844,2741.1 L1846,2733.6 L1848,2743.2 L1850,2745.7 L1852,2748.1 L1854,2744.5 L1856,2749.0 L1858,2749.0 L1860,2749.0 L1862,2749.0 L1864,2739.0 L1866,2732.5 L1868,2735.6 L1870,2735.3 L1872,2724.7 L1874,2740.0 L1876,2730.0 L1878,2735.7 L1880,2729.8 L1882,2732.6 L1884,2719.6 L1886,2717.1 L1888,2712.1 L1890,2713.6 L1892,2712.1 L1894,2726.0 L1896,2724.8 L1898,2713.9 L1900,2713.2 L1902,2714.3 L1904,2725.5 L1906,2730.2 L1908,2744.6 L1910,2749.0 L1912,2747.9 L1914,2749.0 L1916,2741.1 L1918,2749.0 L1920,2747.5 L1922,2749.0 L1924,2749.0 L1926,2749.0 L1928,2749.0 L1930,2745.6 L1932,2739.7 L1934,2727.3 L1936,2715.3 L1938,2727.7 L1940,2717.5 L1942,2714.8 L1944,2712.5 L1946,2716.8 L1948,2733.7 L1950,2736.4 L1952,2729.3 L1954,2730.0 L1956,2730.3 L1958,2727.0 L1960,2740.4 L1962,2727.9 L1964,2719.8 L1966,2716.1 L1968,2733.0 L1970,2737.0 L1972,2724.8 L1974,2739.6 L1976,2747.3 L1978,2741.5 L1980,2738.0 L1982,2733.9 L1984,2736.5 L1986,2730.1 L1988,2729.4 L1990,2725.3 L1992,2728.5 L1994,2721.7 L1996,2731.4 L1998,2722.9 L2000,2733.5 L2002,2728.8 L2004,2719.6 L2006,2716.2 L2008,2715.3 L2010,2711.7 L2012,2724.2 L2014,2733.2 L2016,2731.6 L2018,2730.6 L2020,2717.4 L2022,2722.6 L2024,2717.8 L2026,2714.2 L2028,2740.5 L2030,2724.2 L2032,2721.4 L2034,2714.2 L2036,2720.8 L2038,2725.5 L2040,2724.4 L2042,2714.9 L2044,2728.6 L2046,2734.0 L2048,2725.4 L2050,2740.6 L2052,2728.6 L2054,2720.8 L2056,2721.8 L2058,2736.6 L2060,2735.8 L2062,2726.1 L2064,2719.8 L2066,2719.7 L2068,2714.0 L2070,2711.4 L2072,2727.3 L2074,2725.5 L2076,2740.4 L2078,2729.8 L2080,2736.3 L2082,2728.4 L2084,2729.7 L2086,2729.8 L2088,2736.3 L2090,2746.1 L2092,2737.8 L2094,2742.7 L2096,2749.0 L2098,2748.9 L2100,2732.4 L2102,2729.3 L2104,2729.1 L2106,2734.6 L2108,2745.6 L2110,2739.1 L2112,2748.2 L2114,2746.1 L2116,2748.8 L2118,2731.3 L2120,2735.1 L2122,2730.7 L2124,2739.0 L2126,2729.5 L2128,2736.0 L2130,2728.3 L2132,2721.1 L2134,2735.4 L2136,2725.2 L2138,2730.0 L2140,2716.5 L2142,2713.0 L2144,2711.2 L2146,2711.2 L2148,2711.2 L2150,2711.1 L2152,2711.1 L2154,2711.1 L2156,2713.1 L2158,2711.1 L2160,2716.1 L2162,2711.9 L2164,2720.3 L2166,2714.2 L2168,2726.3 L2170,2730.8 L2172,2725.3 L2174,2737.5 L2176,2714.2 L2178,2728.5 L2180,2741.6 L2182,2728.1 L2184,2718.1 L2186,2715.0 L2188,2730.1 L2190,2734.3 L2192,2727.9 L2194,2734.9 L2196,2742.6 L2198,2751.9 L2200,2757.2 L2202,2755.8 L2204,2762.0 L2206,2763.6 L2208,2762.9 L2210,2763.1 L2212,2767.9 L2214,2764.1 L2216,2760.3 L2218,2761.3 L2220,2762.3 L2222,2767.0 L2224,2759.8 L2226,2758.3 L2228,2761.7 L2230,2764.7 L2232,2760.8 L2234,2765.1 L2236,2760.1 L2238,2762.4 L2240,2758.9 L2242,2760.0 L2244,2760.2 L2246,2762.2 L2248,2767.2 L2250,2769.0 L2252,2764.4 L2254,2766.2 L2256,2768.8 L2258,2769.0 L2260,2769.0 L2262,2767.2 L2264,2769.0 L2266,2766.7 L2268,2767.2 L2270,2767.6 L2272,2764.5 L2274,2766.5 L2276,2764.2 L2278,2763.4 L2280,2765.3 L2282,2766.2 L2284,2767.6 L2286,2764.5 L2288,2766.2 L2290,2769.0 L2292,2768.7 L2294,2762.0 L2296,2764.6 L2298,2765.7 L2300,2767.2 L2302,2765.5 L2304,2765.4 L2306,2765.5 L2308,2761.2 L2310,2762.0 L2312,2758.1 L2314,2756.3 L2316,2757.0 L2318,2754.0 L2320,2754.0 L2322,2754.0 L2324,2754.0 L2326,2755.3 L2328,2755.7 L2330,2754.3 L2332,2754.0 L2334,2757.1 L2336,2756.4 L2338,2757.8 L2340,2760.5 L2342,2756.6 L2344,2758.7 L2346,2760.9 L2348,2761.3 L2350,2755.8 L2352,2760.6 L2354,2759.0 L2356,2754.0 L2358,2761.0 L2360,2758.5 L2362,2760.4 L2364,2764.1 L2366,2757.8 L2368,2755.2 L2370,2758.9 L2372,2760.9 L2374,2757.2 L2376,2754.0 L2378,2754.0 L2380,2754.0 L2382,2754.0 L2384,2755.9 L2386,2754.0 L2388,2754.0 L2390,2755.1 L2392,2754.0 L2394,2755.1 L2396,2754.2 L2398,2760.9 L2400,2764.5 L2402,2760.5 L2404,2764.9 L2406,2762.0 L2408,2765.0 L2410,2768.3 L2412,2765.1 L2414,2759.0 L2416,2761.5 L2418,2758.8 L2420,2762.2 L2422,2759.2 L2424,2755.5 L2426,2756.3 L2428,2763.2 L2430,2758.2 L2432,2757.9 L2434,2760.3 L2436,2760.0 L2438,2756.2 L2440,2761.0 L2442,2757.0 L2444,2757.8 L2446,2762.9 L2448,2758.3 L2450,2757.0 L2452,2763.7 L2454,2758.4 L2456,2762.6 L2458,2762.6 L2460,2762.7 L2462,2764.5 L2464,2766.7 L2466,2764.6 L2468,2758.2 L2470,2755.3 L2472,2760.3 L2474,2763.5 L2476,2756.0 L2478,2759.7 L2480,2756.5 L2482,2761.5 L2484,2760.2 L2486,2764.2 L2488,2765.1 L2490,2765.7 L2492,2766.3 L2494,2763.5 L2496,2767.1 L2498,2761.4 L2500,2766.4 L2502,2762.8 L2504,2766.3 L2506,2769.0 L2508,2768.7 L2510,2764.3 L2512,2768.6 L2514,2769.0 L2516,2767.2 L2518,2769.0 L2520,2763.1 L2522,2768.1 L2524,2769.0 L2526,2766.4 L2528,2767.6 L2530,2764.5 L2532,2764.8 L2534,2761.3 L2536,2763.8 L2538,2768.1 L2540,2763.4 L2542,2767.0 L2544,2768.0 L2546,2765.1 L2548,2767.1 L2550,2762.8 L2552,2765.4 L2554,2769.0 L2556,2769.0 L2558,2769.0 L2560,2769.0 L2562,2767.6 L2564,2767.0 L2566,2766.0 L2568,2761.7 L2570,2753.7 L2572,2750.2 L2574,2754.2 L2576,2747.3 L2578,2740.5 L2580,2739.0 L2582,2739.0 L2584,2739.0 L2586,2739.0 L2588,2744.4 L2590,2740.3 L2592,2744.5 L2594,2744.3 L2596,2747.0 L2598,2752.7 L2600,2746.7 L2602,2747.6 L2604,2742.4 L2606,2743.3 L2608,2743.5 L2610,2744.2 L2612,2744.3 L2614,2743.0 L2616,2754.8 L2618,2759.0 L2620,2759.0 L2622,2756.0 L2624,2756.4 L2626,2749.5 L2628,2750.2 L2630,2753.4 L2632,2759.0 L2634,2759.0 L2636,2759.0 L2638,2759.0 L2640,2753.3 L2642,2746.9 L2644,2750.7 L2646,2753.5 L2648,2743.9 L2650,2752.4 L2652,2750.9 L2654,2749.1 L2656,2749.5 L2658,2748.6 L2660,2751.6 L2662,2753.2 L2664,2758.8 L2666,2759.0 L2668,2759.0 L2670,2755.3 L2672,2753.2 L2674,2750.6 L2676,2746.9 L2678,2746.0 L2680,2749.0 L2682,2747.2 L2684,2740.7 L2686,2740.8 L2688,2748.3 L2690,2745.9 L2692,2743.1 L2694,2743.2 L2696,2749.5 L2698,2749.1 L2700,2754.3 L2702,2756.9 L2704,2754.4 L2706,2748.1 L2708,2752.8 L2710,2752.6 L2712,2757.4 L2714,2752.2 L2716,2751.4 L2718,2750.0 L2720,2749.0 L2722,2745.2 L2724,2746.1 L2726,2749.9 L2728,2748.8 L2730,2747.7 L2732,2749.9 L2734,2753.5 L2736,2752.9 L2738,2748.4 L2740,2749.5 L2742,2748.7 L2744,2741.7 L2746,2739.0 L2748,2739.0 L2750,2742.6 L2752,2744.2 L2754,2757.1 L2756,2748.2 L2758,2745.6 L2760,2750.7 L2762,2754.3 L2764,2758.0 L2766,2759.0 L2768,2759.0 L2770,2758.2 L2772,2754.0 L2774,2753.7 L2776,2754.5 L2778,2752.8 L2780,2757.2 L2782,2757.8 L2784,2759.0 L2786,2757.4 L2788,2752.0 L2790,2754.3 L2792,2758.9 L2794,2757.4 L2796,2755.5 L2798,2754.3 L2800,2756.6 L2802,2748.6 L2804,2748.9 L2806,2746.9 L2808,2747.7 L2810,2751.0 L2812,2749.1 L2814,2748.7 L2816,2754.4 L2818,2754.6 L2820,2752.2 L2822,2754.6 L2824,2753.0 L2826,2750.0 L2828,2747.0 L2830,2744.0 L2832,2742.0 L2834,2733.7 L2836,2740.4 L2838,2737.2 L2840,2733.3 L2842,2732.9 L2844,2724.4 L2846,2721.1 L2848,2729.8 L2850,2733.7 L2852,2731.9 L2854,2734.2 L2856,2737.9 L2858,2737.2 L2860,2730.3 L2862,2723.1 L2864,2723.0 L2866,2725.5 L2868,2731.1 L2870,2728.8 L2872,2720.5 L2874,2729.2 L2876,2737.7 L2878,2731.7 L2880,2737.4 L2882,2738.6 L2884,2740.2 L2886,2744.0 L2888,2739.7 L2890,2729.7 L2892,2725.3 L2894,2724.7 L2896,2724.9 L2898,2727.3 L2900,2723.4 L2902,2729.3 L2904,2731.9 L2906,2729.1 L2908,2734.7 L2910,2726.7 L2912,2729.7 L2914,2725.8 L2916,2725.0 L2918,2732.2 L2920,2735.1 L2922,2737.6 L2924,2737.2 L2926,2726.1 L2928,2719.7 L2930,2723.7 L2932,2728.8 L2934,2736.7 L2936,2737.5 L2938,2735.8 L2940,2738.7 L2942,2729.5 L2944,2731.0 L2946,2736.0 L2948,2729.7 L2950,2725.6 L2952,2725.2 L2954,2732.1 L2956,2727.9 L2958,2733.3 L2960,2738.9 L2962,2744.0 L2964,2736.9 L2966,2740.4 L2968,2738.5 L2970,2738.3 L2972,2742.6 L2974,2732.3 L2976,2730.8 L2978,2728.8 L2980,2738.2 L2982,2732.1 L2984,2726.7 L2986,2731.6 L2988,2736.8 L2990,2733.2 L2992,2732.3 L2994,2730.3 L2996,2732.3 L2998,2732.7 L3000,2741.4 L3002,2744.0 L3004,2739.4 L3006,2730.3 L3008,2728.1 L3010,2731.7 L3012,2724.8 L3014,2732.5 L3016,2730.4 L3018,2733.7 L3020,2727.4 L3022,2724.3 L3024,2729.5 L3026,2730.7 L3028,2736.7 L3030,2742.9 L3032,2743.1 L3034,2740.4 L3036,2739.2 L3038,2744.0 L3040,2736.6 L3042,2732.8 L3044,2729.2 L3046,2730.8 L3048,2739.8 L3050,2737.2 L3052,2728.0 L3054,2723.8 L3056,2739.8 L3058,2744.0 L3060,2740.9 L3062,2730.0 L3064,2731.3 L3066,2726.6 L3068,2725.3 L3070,2727.5 L3072,2725.1 L3074,2718.2 L3076,2729.5 L3078,2721.9 L3080,2720.9 L3082,2724.8 L3084,2726.7 L3086,2732.8 L3088,2725.7 L3090,2735.7 L3092,2736.7 L3094,2744.0 L3096,2744.0 L3098,2744.0 L3100,2744.0 L3102,2744.0 L3104,2742.6 L3106,2739.8 L3108,2742.7 L3110,2735.0 L3112,2724.1 L3114,2729.4 L3116,2737.8 L3118,2736.2 L3120,2735.8 L3122,2744.0 L3124,2744.0 L3126,2744.0 L3128,2735.4 L3130,2733.5 L3132,2734.0 L3134,2742.8 L3136,2729.8 L3138,2736.3 L3140,2730.1 L3142,2738.4 L3144,2738.9 L3146,2743.9 L3148,2744.0 L3150,2742.6 L3152,2744.0 L3154,2744.0 L3156,2744.0 L3158,2737.9 L3160,2739.8 L3162,2744.0 L3164,2743.9 L3166,2743.1 L3168,2734.7 L3170,2737.1 L3172,2729.8 L3174,2737.6 L3176,2743.4 L3178,2739.6 L3180,2727.1 L3182,2729.3 L3184,2724.5 L3186,2722.9 L3188,2724.6 L3190,2735.0 L3192,2739.1 L3194,2741.9 L3196,2744.0 L3198,2744.0 L3200,2744.0 L3202,2744.0 L3204,2744.0 L3206,2740.8 L3208,2736.1 L3210,2738.6 L3212,2741.2 L3214,2735.2 L3216,2730.2 L3218,2722.7 L3220,2723.5 L3222,2730.2 L3224,2732.3 L3226,2742.8 L3228,2741.2 L3230,2744.0 L3232,2744.0 L3234,2744.0 L3236,2731.7 L3238,2725.5 L3240,2719.9 L3242,2724.8 L3244,2731.3 L3246,2726.7 L3248,2721.7 L3250,2726.1 L3252,2731.5 L3254,2723.2 L3256,2721.6 L3258,2720.7 L3260,2729.7 L3262,2734.4 L3264,2728.0 L3266,2725.9 L3268,2716.8 L3270,2718.9 L3272,2724.8 L3274,2736.4 L3276,2728.2 L3278,2727.1 L3280,2727.0 L3282,2724.2 L3284,2733.9 L3286,2737.7 L3288,2730.8 L3290,2725.1 L3292,2726.5 L3294,2723.3 L3296,2732.5 L3298,2732.6 L3300,2737.1 L3302,2743.1 L3304,2744.0 L3306,2744.0 L3308,2744.0 L3310,2744.0 L3312,2735.3 L3314,2738.3 L3316,2744.0 L3318,2735.1 L3320,2734.1 L3322,2734.0 L3324,2735.7 L3326,2739.1 L3328,2744.0 L3330,2744.0 L3332,2739.1 L3334,2740.5 L3336,2720.7 L3338,2740.5 L3340,2744.0 L3342,2739.4 L3344,2741.6 L3346,2742.3 L3348,2729.4 L3350,2730.1 L3352,2729.8 L3354,2729.1 L3356,2718.2 L3358,2716.4 L3360,2718.2 L3362,2716.3 L3364,2716.3 L3366,2716.3 L3368,2716.3 L3370,2716.3 L3372,2716.8 L3374,2725.4 L3376,2729.2 L3378,2724.7 L3380,2726.0 L3382,2728.6 L3384,2728.2 L3386,2726.7 L3388,2727.8 L3390,2722.1 L3392,2716.2 L3394,2716.2 L3396,2717.1 L3398,2716.2 L3400,2716.2 L3402,2716.1 L3404,2716.1 L3406,2724.0 L3408,2723.8 L3410,2720.0 L3412,2725.8 L3414,2716.1 L3416,2716.1 L3418,2721.1 L3420,2728.4 L3422,2736.4 L3424,2735.8 L3426,2738.4 L3428,2732.5 L3430,2732.4 L3432,2736.1 L3434,2731.7 L3436,2725.6 L3438,2718.4 L3440,2712.6 L3442,2713.7 L3444,2713.1 L3446,2712.5 L3448,2713.2 L3450,2714.0 L3452,2712.7 L3454,2711.3 L3456,2711.5 L3458,2711.3 L3460,2712.8 L3462,2712.2 L3464,2711.4 L3466,2712.6 L3468,2712.3 L3470,2712.5 L3472,2711.8 L3474,2713.3 L3476,2713.5 L3478,2712.8 L3480,2712.4 L3482,2713.1 L3484,2714.0 L3486,2712.2 L3488,2711.7 L3490,2713.0 L3492,2714.0 L3494,2713.9 L3496,2714.0 L3498,2712.9 L3500,2712.0 L3502,2711.1 L3504,2710.5 L3506,2710.0 L3508,2710.0 L3510,2710.0 L3512,2710.4 L3514,2710.0 L3516,2710.0 L3518,2710.0 L3520,2710.0 L3522,2710.2 L3524,2711.2 L3526,2710.7 L3528,2711.7 L3530,2710.8 L3532,2710.8 L3534,2711.0 L3536,2710.0 L3538,2710.0 L3540,2710.0 L3542,2710.7 L3544,2711.7 L3546,2710.6 L3548,2710.5 L3550,2711.0 L3552,2710.4 L3554,2710.3 L3556,2710.9 L3558,2711.0 L3560,2710.3 L3562,2712.2 L3564,2710.2 L3566,2711.9 L3568,2711.0 L3570,2711.3 L3572,2712.6 L3574,2712.6 L3576,2712.7 L3578,2712.3 L3580,2712.5 L3582,2711.1 L3584,2711.6 L3586,2710.6 L3588,2710.3 L3590,2710.5 L3592,2710.3 L3594,2710.9 L3596,2710.9 L3598,2710.3 L3600,2711.3 L3602,2711.5 L3604,2711.7 L3606,2711.2 L3608,2711.4 L3610,2711.5 L3612,2712.1 L3614,2711.0 L3616,2710.9 L3618,2710.8 L3620,2710.9 L3622,2710.0 L3624,2711.1 L3626,2710.8 L3628,2711.3 L3630,2711.4 L3632,2712.5 L3634,2710.9 L3636,2710.8 L3638,2712.0 L3640,2711.5 L3642,2715.3 L3644,2714.7 L3646,2715.4 L3648,2717.2 L3650,2719.0 L3652,2719.0 L3654,2719.1 L3656,2719.1 L3658,2728.0 L3660,2732.8 L3662,2729.3 L3664,2733.1 L3666,2738.0 L3668,2732.4 L3670,2739.9 L3672,2742.9 L3674,2739.5 L3676,2734.3 L3678,2728.7 L3680,2729.7 L3682,2730.3 L3684,2723.0 L3686,2723.0 L3688,2730.2 L3690,2736.9 L3692,2737.0 L3694,2729.8 L3696,2738.8 L3698,2729.0 L3700,2741.0 L3702,2744.6 L3704,2744.5 L3706,2746.5 L3708,2750.3 L3710,2745.0 L3712,2747.2 L3714,2750.5 L3716,2750.5 L3718,2748.5 L3720,2750.2 L3722,2740.6 L3724,2748.4 L3726,2746.5 L3728,2740.2 L3730,2733.3 L3732,2725.4 L3734,2723.7 L3736,2721.0 L3738,2724.5 L3740,2728.6 L3742,2732.2 L3744,2726.9 L3746,2736.6 L3748,2737.8 L3750,2728.8 L3752,2732.0 L3754,2740.8 L3756,2739.4 L3758,2751.5 L3760,2742.4 L3762,2735.6 L3764,2733.7 L3766,2735.9 L3768,2732.4 L3770,2721.8 L3772,2736.7 L3774,2730.6 L3776,2725.9 L3778,2738.0 L3780,2737.4 L3782,2734.1 L3784,2730.7 L3786,2726.7 L3788,2730.3 L3790,2741.2 L3792,2740.2 L3794,2738.2 L3796,2730.4 L3798,2731.0 L3800,2733.2 L3802,2739.2 L3804,2737.9 L3806,2745.1 L3808,2748.0 L3810,2748.4 L3812,2740.4 L3814,2730.3 L3816,2729.4 L3818,2735.1 L3820,2729.8 L3822,2727.5 L3824,2723.0 L3826,2723.7 L3828,2725.5 L3830,2727.7 L3832,2735.6 L3834,2727.8 L3836,2726.8 L3838,2723.4 L3840,2723.4 L3842,2723.5 L3844,2723.5 L3846,2725.6 L3848,2734.6 L3850,2733.7 L3852,2737.9 L3854,2738.8 L3856,2735.4 L3858,2726.7 L3860,2726.0 L3862,2728.7 L3864,2737.2 L3866,2743.3 L3868,2743.5 L3870,2731.6 L3872,2729.9 L3874,2739.3 L3876,2735.3 L3878,2737.9 L3880,2735.6 L3882,2741.2 L3884,2741.2 L3886,2751.1 L3888,2754.5 L3890,2747.1 L3892,2733.8 L3894,2749.9 L3896,2739.5 L3898,2742.4 L3900,2741.4 L3902,2741.2 L3904,2735.4 L3906,2731.5 L3908,2725.6 L3910,2725.0 L3912,2725.1 L3914,2725.1 L3916,2725.2 L3918,2725.2 L3920,2725.3 L3922,2725.3 L3924,2726.8 L3926,2728.0 L3928,2729.0 L3930,2725.9 L3932,2725.6 L3934,2725.6 L3936,2725.7 L3938,2734.6 L3940,2734.2 L3942,2744.8 L3944,2749.7 L3946,2736.4 L3948,2741.7 L3950,2730.7 L3952,2731.7 L3954,2738.7 L3956,2748.1 L3958,2741.0 L3960,2744.5 L3962,2745.4 L3964,2737.6 L3966,2741.3 L3968,2738.2 L3970,2746.2 L3972,2742.9 L3974,2741.8 L3976,2748.5 L3978,2743.4 L3980,2744.5 L3982,2738.6 L3984,2738.0 L3986,2731.5 L3988,2732.1 L3990,2728.7 L3992,2730.6 L3994,2727.0 L3996,2727.0 L3998,2734.7 L4000,2738.4 L4002,2743.6 L4004,2749.6 L4006,2750.5 L4008,2739.0 L4010,2733.0 L4012,2731.6 L4014,2732.6 L4016,2742.6 L4018,2744.8 L4020,2749.1 L4022,2740.2 L4024,2752.5 L4026,2757.7 L4028,2748.0 L4030,2742.4 L4032,2751.2 L4034,2749.0 L4036,2747.4 L4038,2739.9 L4040,2729.9 L4042,2728.6 L4044,2728.2 L4046,2728.2 L4048,2728.3 L4050,2728.3 L4052,2728.3 L4054,2735.9 L4056,2741.5 L4058,2746.5 L4060,2753.1 L4062,2752.1 L4064,2757.4 L4066,2758.7 L4068,2752.9 L4070,2756.1 L4072,2754.0 L4074,2749.9 L4076,2756.9 L4078,2735.5 L4080,2747.4 L4082,2744.2 L4084,2745.4 L4086,2747.4 L4088,2754.7 L4090,2754.7 L4092,2749.6 L4094,2746.5 L4096,2749.0 L4098,2754.7 L4100,2759.1 L4102,2756.7 L4104,2754.8 L4106,2752.9 L4108,2748.4 L4110,2744.0 L4112,2746.3 L4114,2746.5 L4116,2743.2 L4118,2737.9 L4120,2736.7 L4122,2744.4 L4124,2739.1 L4126,2743.8 L4128,2745.8 L4130,2749.0 L4132,2748.0 L4134,2740.7 L4136,2738.1 L4138,2740.9 L4140,2732.4 L4142,2734.6 L4144,2731.7 L4146,2726.7 L4148,2731.0 L4150,2726.1 L4152,2726.3 L4154,2728.6 L4156,2729.9 L4158,2730.0 L4160,2735.4 L4162,2742.2 L4164,2744.0 L4166,2735.8 L4168,2724.2 L4170,2732.6 L4172,2743.8 L4174,2743.4 L4176,2744.0 L4178,2722.1 L4180,2743.3 L4182,2732.8 L4184,2730.2 L4186,2733.2 L4188,2730.0 L4190,2729.0 L4192,2721.9 L4194,2714.0 L4196,2720.7 L4198,2733.0 L4200,2721.4 L4202,2733.8 L4204,2736.4 L4206,2721.4 L4208,2720.9 L4210,2723.0 L4212,2727.7 L4214,2727.8 L4216,2718.7 L4218,2716.2 L4220,2728.3 L4222,2725.0 L4224,2731.6 L4226,2732.0 L4228,2736.4 L4230,2741.2 L4232,2730.6 L4234,2726.2 L4236,2728.3 L4238,2731.1 L4240,2731.6 L4242,2737.7 L4244,2738.7 L4246,2733.5 L4248,2738.7 L4250,2733.8 L4252,2737.2 L4254,2741.2 L4256,2741.8 L4258,2744.0 L4260,2744.0 L4262,2739.7 L4264,2738.1 L4266,2743.1 L4268,2740.2 L4270,2744.0 L4272,2744.0 L4274,2733.9 L4276,2742.4 L4278,2738.8 L4280,2735.1 L4282,2738.0 L4284,2744.0 L4286,2744.0 L4288,2744.0 L4290,2743.7 L4292,2744.0 L4294,2744.0 L4296,2738.3 L4298,2739.7 L4300,2740.1 L4302,2744.0 L4304,2731.6 L4306,2733.8 L4308,2741.2 L4310,2731.0 L4312,2735.6 L4314,2734.5 L4316,2731.9 L4318,2734.8 L4320,2724.1 L4322,2729.6 L4324,2725.6 L4326,2725.6 L4328,2720.3 L4330,2725.2 L4332,2722.4 L4334,2732.5 L4336,2724.6 L4338,2714.0 L4340,2714.0 L4342,2714.0 L4344,2714.0 L4346,2714.0 L4348,2714.0 L4350,2714.0 L4352,2714.0 L4354,2720.0 L4356,2725.1 L4358,2731.6 L4360,2722.9 L4362,2727.3 L4364,2726.8 L4366,2720.0 L4368,2716.6 L4370,2714.0 L4372,2725.8 L4374,2734.9 L4376,2724.8 L4378,2723.1 L4380,2733.5 L4382,2730.8 L4384,2734.6 L4386,2738.7 L4388,2730.7 L4390,2726.3 L4392,2726.6 L4394,2724.3 L4396,2714.3 L4398,2716.7 L4400,2723.4 L4402,2726.7 L4404,2732.4 L4406,2736.2 L4408,2735.7 L4410,2725.0 L4412,2732.3 L4414,2728.5 L4416,2737.5 L4418,2731.3 L4420,2726.3 L4422,2734.2 L4424,2741.9 L4426,2744.0 L4428,2733.6 L4430,2732.0 L4432,2730.7 L4434,2729.8 L4436,2723.4 L4438,2714.0 L4440,2733.1 L4442,2740.4 L4444,2737.1 L4446,2737.6 L4448,2736.3 L4450,2737.3 L4452,2743.0 L4454,2736.8 L4456,2733.8 L4458,2727.3 L4460,2725.0 L4462,2727.3 L4464,2734.0 L4466,2739.4 L4468,2736.3 L4470,2724.9 L4472,2717.1 L4474,2715.9 L4476,2723.0 L4478,2722.0 L4480,2723.7 L4482,2716.8 L4484,2714.0 L4486,2716.2 L4488,2726.4 L4490,2733.1 L4492,2737.1 L4494,2734.8 L4496,2740.7 L4498,2744.0 L4500,2744.0 L4502,2744.0 L4504,2744.0 L4506,2744.0 L4508,2739.6 L4510,2734.0 L4512,2726.5 L4514,2722.2 L4516,2725.4 L4518,2715.8 L4520,2718.8 L4522,2721.0 L4524,2723.6 L4526,2716.3 L4528,2735.4 L4530,2731.6 L4532,2725.9 L4534,2714.0 L4536,2715.2 L4538,2718.3 L4540,2714.0 L4542,2714.0 L4544,2714.0 L4546,2714.0 L4548,2714.0 L4550,2714.0 L4552,2714.0 L4554,2714.0 L4556,2717.8 L4558,2724.4 L4560,2724.1 L4562,2735.0 L4564,2723.6 L4566,2730.6 L4568,2719.5 L4570,2734.1 L4572,2732.6 L4574,2732.3 L4576,2727.8 L4578,2721.6 L4580,2714.0 L4582,2724.2 L4584,2721.1 L4586,2729.4 L4588,2728.2 L4590,2721.3 L4592,2720.4 L4594,2720.7 L4596,2716.1 L4598,2714.0 L4600,2714.0 L4602,2714.0 L4604,2714.0 L4606,2714.0 L4608,2714.0 L4610,2714.0 L4612,2714.0 L4614,2714.0 L4616,2715.5 L4618,2725.8 L4620,2729.2 L4622,2737.7 L4624,2732.7 L4626,2723.6 L4628,2725.1 L4630,2719.2 L4632,2714.0 L4634,2727.7 L4636,2722.6 L4638,2718.9 L4640,2729.7 L4642,2740.6 L4644,2729.0 L4646,2726.1 L4648,2732.7 L4650,2727.4 L4652,2740.3 L4654,2744.0 L4656,2735.1 L4658,2740.6 L4660,2744.0 L4662,2736.1 L4664,2741.3 L4666,2743.1 L4668,2743.0 L4670,2744.0 L4672,2744.0 L4674,2744.0 L4676,2744.0 L4678,2741.6 L4680,2738.5 L4682,2731.9 L4684,2728.9 L4686,2725.4 L4688,2729.5 L4690,2729.3 L4692,2736.1 L4694,2730.3 L4696,2730.4 L4698,2737.0 L4700,2724.9 L4702,2719.4 L4704,2710.0 L4706,2709.0 L4708,2709.0 L4710,2709.0 L4712,2709.5 L4714,2710.1 L4716,2710.5 L4718,2711.6 L4720,2710.4 L4722,2710.9 L4724,2710.2 L4726,2711.6 L4728,2713.0 L4730,2713.5 L4732,2714.0 L4734,2714.0 L4736,2714.0 L4738,2714.0 L4740,2714.0 L4742,2714.0 L4744,2714.0 L4746,2714.0 L4748,2714.0 L4750,2713.1 L4752,2713.6 L4754,2711.5 L4756,2712.6 L4758,2711.5 L4760,2713.2 L4762,2713.4 L4764,2713.7 L4766,2712.5 L4768,2711.0 L4770,2712.3 L4772,2712.0 L4774,2712.3 L4776,2710.3 L4778,2710.9 L4780,2712.6 L4782,2712.5 L4784,2712.0 L4786,2713.7 L4788,2714.0 L4790,2712.4 L4792,2711.5 L4794,2711.5 L4796,2709.8 L4798,2711.5 L4800,2711.9 L4802,2713.0 L4804,2714.0 L4806,2714.0 L4808,2714.0 L4810,2714.0 L4812,2713.0 L4814,2712.7 L4816,2711.0 L4818,2710.0 L4820,2709.0 L4822,2709.0 L4824,2709.0 L4826,2709.0 L4828,2709.5 L4830,2710.9 L4832,2711.8 L4834,2712.4 L4836,2712.5 L4838,2711.8 L4840,2712.4 L4842,2711.9 L4844,2712.6 L4846,2711.7 L4848,2711.2 L4850,2710.5 L4852,2711.3 L4854,2712.7 L4856,2713.7 L4858,2713.7 L4860,2713.9 L4862,2712.7 L4864,2711.4 L4866,2710.6 L4868,2712.0 L4870,2713.1 L4872,2714.0 L4874,2713.1 L4876,2712.1 L4878,2710.8 L4880,2711.0 L4882,2710.7 L4884,2709.7 L4886,2710.7 L4888,2712.0 L4890,2711.0 L4892,2711.9 L4894,2711.5 L4896,2712.7 L4898,2711.7 L4900,2713.1 L4902,2713.4 L4904,2714.0 L4906,2714.0 L4908,2713.2 L4910,2713.2 L4912,2713.5 L4914,2714.0 L4916,2712.5 L4918,2714.0 L4920,2711.9 L4922,2712.2 L4924,2713.8 L4926,2714.0 L4928,2714.0 L4930,2712.7 L4932,2711.1 L4934,2709.7 L4936,2709.8 L4938,2710.3 L4940,2709.1 L4942,2709.0 L4944,2709.0 L4946,2709.2 L4948,2709.7 L4950,2711.6 L4952,2711.7 L4954,2712.6 L4956,2713.5 L4958,2712.4 L4960,2713.5 L4962,2713.7 L4964,2713.0 L4966,2711.0 L4968,2711.8 L4970,2711.7 L4972,2713.5 L4974,2713.3 L4976,2714.0 L4978,2712.4 L4980,2713.4 L4982,2713.7 L4984,2714.0 L4986,2714.0 L4988,2714.0 L4990,2714.0 L4992,2714.0 L4994,2714.0 L4996,2714.0 L4998,2714.0 L5000,2713.7 L5002,2712.3 L5004,2712.1 L5006,2711.1 L5008,2710.5 L5010,2710.1 L5012,2710.2 L5014,2710.3 L5016,2709.2 L5018,2709.1 L5020,2711.2 L5022,2709.3 L5024,2709.6 L5026,2709.0 L5028,2709.0 L5030,2710.0 L5032,2711.6 L5034,2712.8 L5036,2713.8 L5038,2714.0 L5040,2714.0 L5042,2714.0 L5044,2714.0 L5046,2712.1 L5048,2713.4 L5050,2714.0 L5052,2712.6 L5054,2712.8 L5056,2711.9 L5058,2711.7 L5060,2712.2 L5062,2712.5 L5064,2713.6 L5066,2714.0 L5068,2712.4 L5070,2711.0 L5072,2711.1 L5074,2712.0 L5076,2710.4 L5078,2710.6 L5080,2711.6 L5082,2712.2 L5084,2712.7 L5086,2713.0 L5088,2713.8 L5090,2714.0 L5092,2712.0 L5094,2710.4 L5096,2712.0 L5098,2711.1 L5100,2712.0 L5102,2712.9 L5104,2713.6 L5106,2714.0 L5108,2713.4 L5110,2713.9 L5112,2714.0 L5114,2713.8 L5116,2714.0 L5118,2714.0 L5120,2714.0 L5120,2784 Z" fill="#5676a6"/><rect x="25" y="2707" width="5095" height="39" fill="rgba(255,255,255,0.09)"/></svg><div class="ab" style="left:35px;top:2714.6px;width:22px;height:29px;background:#e4e4e4;clip-path:polygon(0 0,70% 0,100% 25%,100% 100%,0 100%)"></div><div class="ab" style="left:39px;top:2727px;width:14px;height:14px;border-radius:50%;background:#f4f4f4;box-shadow:0 0 0 1px #ccc"></div><div class="ab" style="left:43px;top:2730px;width:6px;height:8px;border-right:2px solid #b06ad0;border-top:2px solid #d05a8a"></div><div class="t" style="left:69.0px;top:2718.1px;font-size:23.26px;line-height:23.26px;font-weight:normal;color:#6c6c6c;transform:scaleX(0.9958);transform-origin:0 0;">02 Amazing Grace</div><div style="position:absolute;left:0px;top:2829px;width:5120px;height:3px;background:#0c0c0c"></div><div style="position:absolute;left:0px;top:2832px;width:5120px;height:2px;background:#3e3e3e"></div><div style="position:absolute;left:0px;top:2834px;width:5120px;height:46px;background:#1d1d1d"></div><div style="position:absolute;left:30.5px;top:2842.7px;width:29px;height:26.3px;border:4px solid #8a8a8a;border-bottom-width:5px;border-radius:4px"></div><div class="ab" style="left:64px;top:2851px;width:0;height:0;border-bottom:10px solid #8a8a8a;border-left:5.5px solid transparent;border-right:5.5px solid transparent"></div><svg class="ab" style="left:91px;top:2841px;width:28px;height:30px" viewBox="0 0 28 30"><path d="M8,24 V5 L26,1 V20" fill="none" stroke="#8a8a8a" stroke-width="3.5"/><ellipse cx="5" cy="24" rx="5" ry="4.5" fill="#8a8a8a"/><ellipse cx="22" cy="21" rx="5" ry="4.5" fill="#8a8a8a"/></svg><div class="ab" style="left:122.6px;top:2851px;width:0;height:0;border-bottom:10px solid #8a8a8a;border-left:5.5px solid transparent;border-right:5.5px solid transparent"></div><div class="t" style="left:158.0px;top:2844.9px;font-size:22.38px;line-height:22.38px;font-weight:normal;color:#d4d4d4;transform:scaleX(1.0272);transform-origin:0 0;">Timescale:</div><div style="position:absolute;left:278px;top:2852px;width:187.5px;height:9.5px;background:#5a5a5a;border-radius:5px"></div><div style="position:absolute;left:278px;top:2852px;width:30px;height:9.5px;background:#4a8df0;border-radius:5px"></div><svg class="ab" style="left:303.7px;top:2842px;width:19px;height:26px" viewBox="0 0 19 26"><path d="M1,8 L9.5,1 L18,8 V23 Q18,25 16,25 H3 Q1,25 1,23 Z" fill="#c8c8c8" stroke="#777" stroke-width="1"/></svg><div class="t" style="left:2281.6px;top:2844.9px;font-size:22.38px;line-height:22.38px;font-weight:normal;color:#d4d4d4;transform:scaleX(1.0727);transform-origin:0 0;white-space:pre;">37 slides total (0:03:51)  -  1 slide selected (0:00:05)</div><div class="t" style="left:4647.3px;top:2844.9px;font-size:22.38px;line-height:22.38px;font-weight:normal;color:#d4d4d4;transform:scaleX(1.0354);transform-origin:0 0;">Master Volume:</div><svg class="ab" style="left:4823px;top:2846px;width:14px;height:18px" viewBox="0 0 14 18"><polygon points="0,6 4,6 12,0 12,18 4,12 0,12" fill="#8a8a8a"/></svg><div style="position:absolute;left:4849.5px;top:2852px;width:199px;height:9.5px;background:#5a5a5a;border-radius:5px"></div><div style="position:absolute;left:4849.5px;top:2852px;width:180px;height:9.5px;background:#4a8df0;border-radius:5px"></div><svg class="ab" style="left:5016.7px;top:2842px;width:20px;height:26px" viewBox="0 0 20 26"><path d="M1,8 L10,1 L19,8 V23 Q19,25 17,25 H3 Q1,25 1,23 Z" fill="#c8c8c8" stroke="#777" stroke-width="1"/></svg><svg class="ab" style="left:5051px;top:2845px;width:27px;height:20px" viewBox="0 0 27 20"><polygon points="0,7 4,7 11,1 11,19 4,13 0,13" fill="#8a8a8a"/><path d="M14,6 Q17,10 14,14 M17,3 Q22,10 17,17 M20,1 Q27,10 20,19" fill="none" stroke="#8a8a8a" stroke-width="2"/></svg></body></html>
